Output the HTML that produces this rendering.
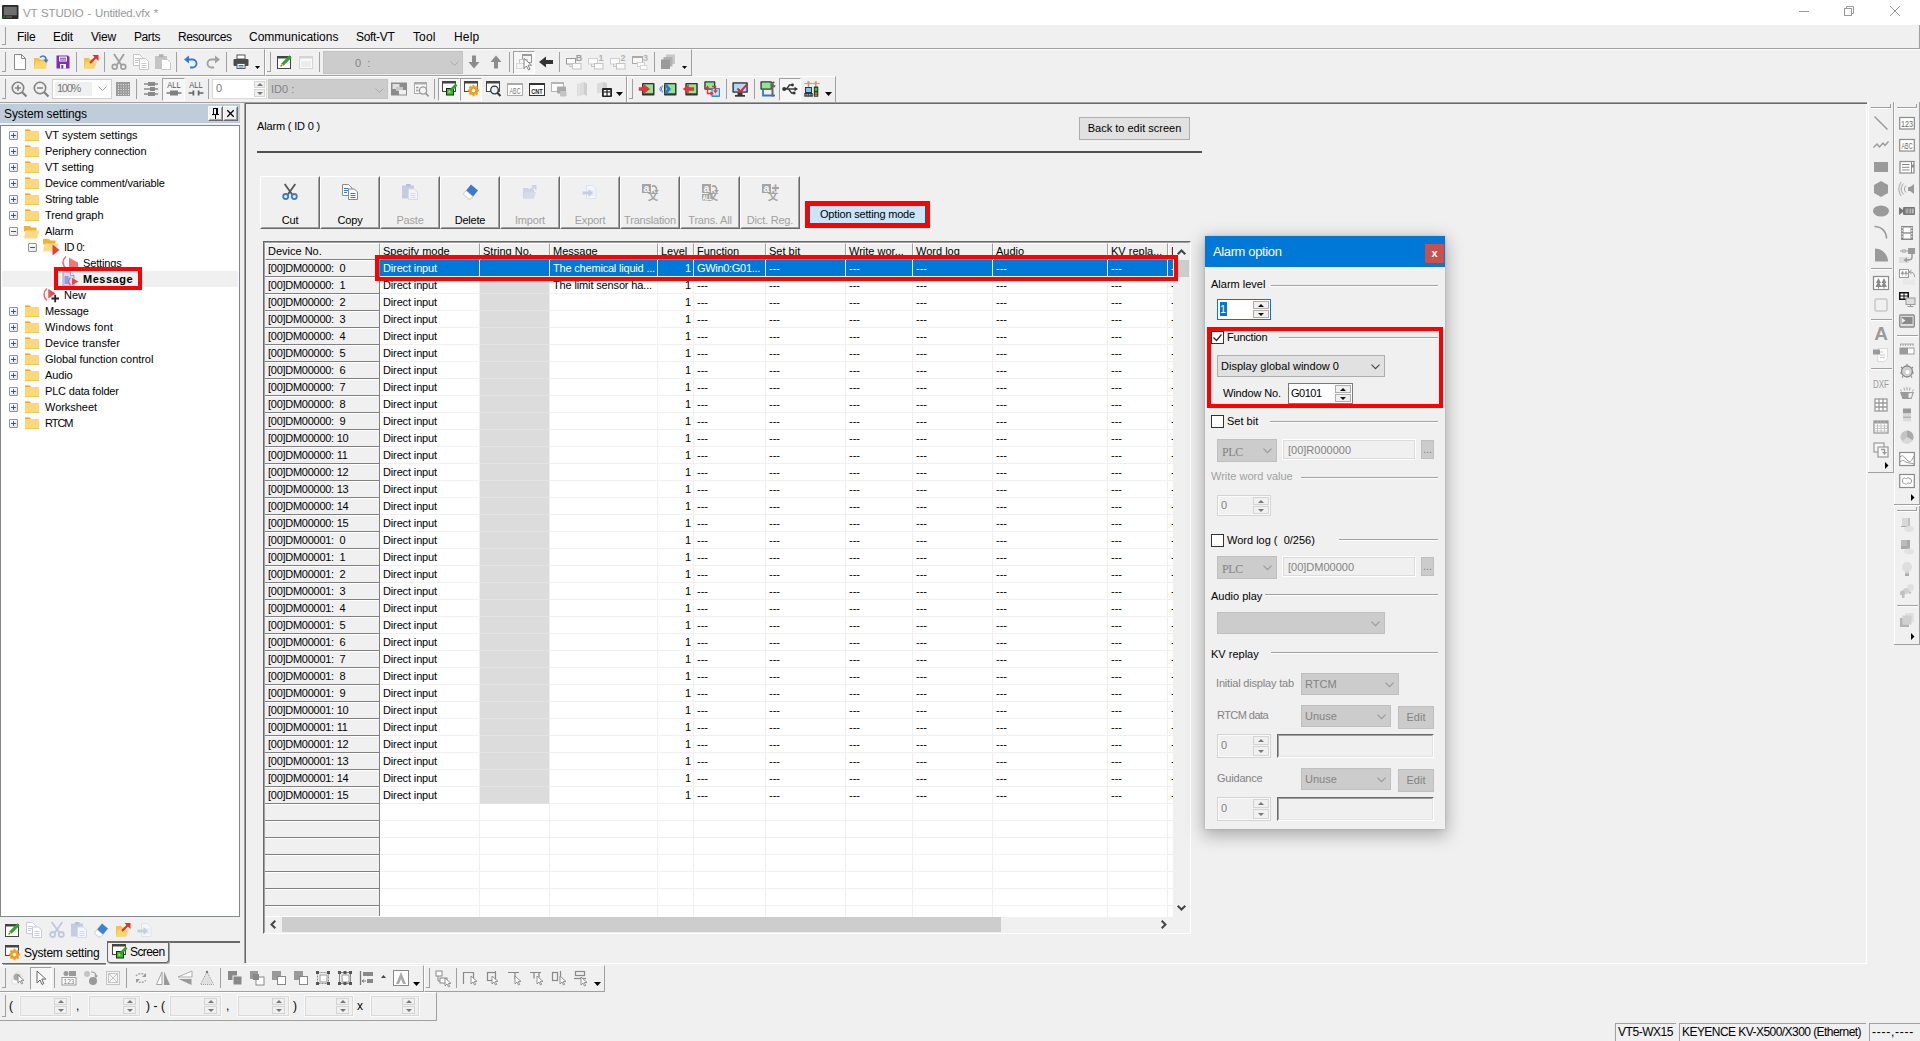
<!DOCTYPE html>
<html lang="en"><head><meta charset="utf-8"><title>VT STUDIO - Untitled.vfx *</title>
<style>
html,body{margin:0;padding:0}
body{width:1920px;height:1041px;overflow:hidden;background:#f0f0f0;position:relative;font-family:"Liberation Sans",sans-serif;font-size:12px;color:#000}
div,svg{position:absolute;box-sizing:border-box}
svg{overflow:visible}
svg text{font-family:"Liberation Sans","Noto Sans CJK SC",sans-serif}
.t{white-space:nowrap;font-size:11px}
.s{white-space:nowrap;font-size:12px}
.g{color:#838383}
.w{color:#fff}
.b{font-weight:bold}
.mono{font-family:"Liberation Mono",monospace}
.raised{border:1px solid;border-color:#fff #696969 #696969 #fff;background:#f0f0f0}
.raised:after{content:"";position:absolute;left:0;top:0;right:0;bottom:0;border:1px solid;border-color:transparent #a0a0a0 #a0a0a0 transparent}
.sunk{border:1px solid;border-color:#a0a0a0 #fff #fff #a0a0a0}
.dd{background:#e1e1e1;border:1px solid #adadad}
.ddd{background:#ccc;border:1px solid #bfbfbf}
.btn{background:#e1e1e1;border:1px solid #adadad;text-align:center}
.fld{background:#fff;border:1px solid #7a7a7a}
.fldd{background:#f0f0f0;border:1px solid #d9d9d9;outline:1px solid #fff}
</style></head><body>
<div style="left:0px;top:0px;width:1920px;height:25px;background:#fff"></div>
<svg style="left:2px;top:5px;" width="17" height="15" viewBox="0 0 17 15"><rect x="0" y="0" width="16.500" height="14" rx="1" fill="#2a2a2a"/><rect x="1.800" y="1.800" width="13" height="8.500" fill="#6e6e6e"/><rect x="1.500" y="11.500" width="1.500" height="1" fill="#3c3"/><rect x="4" y="11.500" width="6" height="1" fill="#777"/></svg>
<div class="s" style="left:23px;top:6px;height:15px;line-height:15px;letter-spacing:-0.189px;color:#999;font-size:11.500px;word-spacing:1px">VT STUDIO - Untitled.vfx *</div>
<svg style="left:1799px;top:11px;" width="10" height="1" viewBox="0 0 10 1"><rect width="10" height="1" fill="#999"/></svg>
<svg style="left:1844px;top:6px;" width="10" height="10" viewBox="0 0 10 10"><path d="M2.500 2.500V.5h7v7h-2" fill="none" stroke="#999"/><rect x=".5" y="2.500" width="7" height="7" fill="#fff" stroke="#999"/></svg>
<svg style="left:1890px;top:6px;" width="10" height="10" viewBox="0 0 10 10"><path d="M0 0l10 10M10 0L0 10" stroke="#999" stroke-width="1"/></svg>
<div style="left:0px;top:25px;width:1920px;height:24px;border-right:1px solid #a0a0a0;border-bottom:1px solid #a0a0a0"></div>
<div style="left:0px;top:49px;width:1920px;height:1px;background:#fff"></div>
<div style="left:2px;top:27px;width:4px;height:18px;border-right:1px solid #a0a0a0;border-bottom:1px solid #a0a0a0"></div>
<div class="s" style="left:17px;top:30px;height:14px;line-height:14px;letter-spacing:-0.209px;">File</div>
<div class="s" style="left:53px;top:30px;height:14px;line-height:14px;letter-spacing:-0.169px;">Edit</div>
<div class="s" style="left:91px;top:30px;height:14px;line-height:14px;letter-spacing:-0.198px;">View</div>
<div class="s" style="left:134px;top:30px;height:14px;line-height:14px;letter-spacing:-0.402px;">Parts</div>
<div class="s" style="left:178px;top:30px;height:14px;line-height:14px;letter-spacing:-0.429px;">Resources</div>
<div class="s" style="left:249px;top:30px;height:14px;line-height:14px;letter-spacing:0.009px;">Communications</div>
<div class="s" style="left:356px;top:30px;height:14px;line-height:14px;letter-spacing:-0.311px;">Soft-VT</div>
<div class="s" style="left:413px;top:30px;height:14px;line-height:14px;letter-spacing:0.122px;">Tool</div>
<div class="s" style="left:454px;top:30px;height:14px;line-height:14px;letter-spacing:0.205px;">Help</div>
<div style="left:0px;top:49px;width:265px;height:27px;border-right:1px solid #a0a0a0;border-bottom:1px solid #a0a0a0;border-top:1px solid #fff"></div>
<div style="left:265px;top:49px;width:427px;height:27px;border-right:1px solid #a0a0a0;border-bottom:1px solid #a0a0a0;border-top:1px solid #fff;border-left:1px solid #fff"></div>
<div style="left:2px;top:52px;width:4px;height:20px;border-right:1px solid #a0a0a0;border-bottom:1px solid #a0a0a0"></div>
<div style="left:267px;top:52px;width:4px;height:20px;border-right:1px solid #a0a0a0;border-bottom:1px solid #a0a0a0"></div>
<svg style="left:11.5px;top:54px;" width="16" height="16" viewBox="0 0 16 16"><path d="M2.500 .5h7l4 4v11h-11z" fill="#fff" stroke="#8a8a8a"/><path d="M9.500 .5v4h4" fill="none" stroke="#8a8a8a"/></svg>
<svg style="left:33px;top:54px;" width="16" height="16" viewBox="0 0 16 16"><path d="M1 4h5l1 1.5h6v9H1z" fill="#f7c04a"/><path d="M1 14.5l2-7h12l-2.5 7z" fill="#fbd56f"/><path d="M7 3.5c3-3 6.5-1 6 3" fill="none" stroke="#2f7dd1" stroke-width="1.6"/><path d="M10.5 5.5h5L13 9z" fill="#2f7dd1"/></svg>
<svg style="left:55px;top:54px;" width="16" height="16" viewBox="0 0 16 16"><path d="M1.5 1.5h11.5l1.5 1.5v11.5h-13z" fill="#7a2fb5"/><rect x="4" y="2.5" width="8" height="5" fill="#fff"/><rect x="5" y="3.7" width="6" height="1" fill="#7a2fb5"/><rect x="5" y="5.5" width="6" height="1" fill="#7a2fb5"/><rect x="5" y="10" width="6" height="4.5" fill="#fff"/><rect x="6.3" y="11" width="2" height="3.5" fill="#7a2fb5"/></svg>
<svg style="left:83px;top:54px;" width="16" height="16" viewBox="0 0 16 16"><path d="M1 4h5l1 1.5h4v9H1z" fill="#f7c04a"/><path d="M1 14.5l2-7h11l-2.5 7z" fill="#fbd56f"/><path d="M7 9L14 2" stroke="#e03030" stroke-width="2.2"/><path d="M9.5 1h6v6z" fill="#e03030"/></svg>
<svg style="left:111px;top:54px;" width="16" height="16" viewBox="0 0 16 16"><path d="M3 0l7.500 11.500M13 0L5.500 11.500" stroke="#a0a0a0" stroke-width="1.900" fill="none"/><circle cx="3.700" cy="12.700" r="2.400" fill="none" stroke="#a0a0a0" stroke-width="1.700"/><circle cx="12.300" cy="12.700" r="2.400" fill="none" stroke="#a0a0a0" stroke-width="1.700"/></svg>
<svg style="left:133px;top:54px;" width="16" height="16" viewBox="0 0 16 16"><path d="M.5 .5h6l3 3v8h-9z" fill="#fff" stroke="#c4c4c4"/><path d="M2 4.500h5M2 6.500h5M2 8.500h3" stroke="#c4c4c4"/><path d="M6.500 4.500h6l3 3v8h-9z" fill="#fff" stroke="#c4c4c4"/><path d="M8.500 9.500h5M8.500 11.500h5M8.500 13.500h5" stroke="#c4c4c4"/></svg>
<svg style="left:155px;top:54px;" width="16" height="16" viewBox="0 0 16 16"><rect x="0" y="2" width="12" height="13" fill="#c4c4c4"/><rect x="4" y=".3" width="4.500" height="3" fill="#b0b0b0"/><path d="M6.500 5.500h6l3 3v7h-9z" fill="#fff" stroke="#c8c8c8"/></svg>
<svg style="left:183px;top:54px;" width="16" height="16" viewBox="0 0 16 16"><path d="M3 5.500h6.500a4 4 0 0 1 0 8H7" fill="none" stroke="#2f7dd1" stroke-width="1.800"/><path d="M1 5.500L6 1.500v8z" fill="#2f7dd1"/></svg>
<svg style="left:205px;top:54px;" width="16" height="16" viewBox="0 0 16 16"><path d="M13 5.500H6.500a4 4 0 0 0 0 8H9" fill="none" stroke="#a0a0a0" stroke-width="1.800"/><path d="M15 5.500L10 1.500v8z" fill="#a0a0a0"/></svg>
<svg style="left:233px;top:54px;" width="16" height="16" viewBox="0 0 16 16"><rect x="4" y="1" width="8" height="4" fill="#fff" stroke="#555"/><rect x="0.500" y="5" width="15" height="7" rx="1" fill="#4a4a4a"/><rect x="4" y="9.500" width="8" height="5" fill="#fff" stroke="#555"/><path d="M5.500 11.500h5M5.500 13h5" stroke="#2f7dd1"/></svg>
<div style="left:76px;top:52px;width:1px;height:20px;background:#a0a0a0"></div>
<div style="left:104px;top:52px;width:1px;height:20px;background:#a0a0a0"></div>
<div style="left:176px;top:52px;width:1px;height:20px;background:#a0a0a0"></div>
<div style="left:226px;top:52px;width:1px;height:20px;background:#a0a0a0"></div>
<div style="left:319px;top:52px;width:1px;height:20px;background:#a0a0a0"></div>
<div style="left:509px;top:52px;width:1px;height:20px;background:#a0a0a0"></div>
<div style="left:559px;top:52px;width:1px;height:20px;background:#a0a0a0"></div>
<div style="left:654px;top:52px;width:1px;height:20px;background:#a0a0a0"></div>
<svg style="left:254.5px;top:65.5px;" width="5" height="3" viewBox="0 0 5 3"><path d="M0 0h5l-2.500 3z" fill="#000"/></svg>
<svg style="left:276px;top:54px;" width="16" height="16" viewBox="0 0 16 16"><rect x="1.500" y="2.500" width="13" height="12" fill="#fff" stroke="#444"/><rect x="1" y="2" width="14" height="2.500" fill="#444"/><path d="M4.500 12.500l1-3.200 8-8 2.200 2.200-8 8z" fill="#2aa52a"/><path d="M4.500 12.500l1-3.200 2.200 2.200z" fill="#f0c090"/><path d="M4.500 12.500l.5-1.500 1 1z" fill="#222"/></svg>
<svg style="left:298px;top:54px;" width="16" height="16" viewBox="0 0 16 16"><rect x="1.500" y="2.500" width="13" height="12" fill="#fafafa" stroke="#d4d4d4"/><rect x="1" y="2" width="14" height="2.500" fill="#d4d4d4"/><path d="M3.500 8h9.500M3.500 10h9.500M3.500 12h9.500" stroke="#c4c4c4" stroke-dasharray="1 1"/></svg>
<div style="left:323px;top:51px;width:140px;height:23px;background:#ccc;border:1px solid #c4c4c4"></div>
<div class="t" style="left:355px;top:56px;height:14px;line-height:14px;color:#838383">0 &nbsp;:</div>
<svg style="left:449.5px;top:60.5px;" width="9" height="5" viewBox="0 0 9 5"><path d="M.5.5l4 4 4-4" fill="none" stroke="#aaa" stroke-width="1"/></svg>
<svg style="left:466px;top:54px;" width="16" height="16" viewBox="0 0 16 16"><path d="M6 1.500h4v6.500h3.500L8 14.500 2.500 8H6z" fill="#8c8c8c"/></svg>
<svg style="left:488px;top:54px;" width="16" height="16" viewBox="0 0 16 16"><path d="M6 14.500h4V8h3.500L8 1.500 2.500 8H6z" fill="#8c8c8c"/></svg>
<div style="left:513px;top:51px;width:22px;height:23px;background:#f6f6f6;border:1px solid;border-color:#a0a0a0 #fff #fff #a0a0a0"></div>
<svg style="left:516px;top:54px;" width="16" height="16" viewBox="0 0 16 16"><rect x="6.500" y=".5" width="9" height="8" fill="#f4f4f4" stroke="#999"/><rect x="6" y="0" width="10" height="2" fill="#999"/><rect x="3.500" y="5.500" width="8" height="6" fill="#f4f4f4" stroke="#c8c8c8"/><rect x=".5" y="9.500" width="8" height="5" fill="#f4f4f4" stroke="#d8d8d8"/><path d="M8 4.500v10l2.500-2.500 2 4 1.500-.8-2-4h3.500z" fill="#fff" stroke="#777" stroke-width=".9"/></svg>
<svg style="left:538px;top:54px;" width="16" height="16" viewBox="0 0 16 16"><path d="M15 6h-7V2.500L1 8l7 5.500V10h7z" fill="#333"/></svg>
<svg style="left:566px;top:54px;" width="16" height="16" viewBox="0 0 16 16"><rect x=".5" y="4.500" width="9" height="5.500" fill="#fafafa" stroke="#9a9a9a"/><rect x="6.500" y="9.500" width="8.500" height="5.500" fill="#fafafa" stroke="#c4c4c4"/><path d="M3.500 10v2.500h3" fill="none" stroke="#c4c4c4"/><text x="13" y="6.500" font-size="9" font-weight="bold" text-anchor="middle" fill="#9a9a9a">B</text></svg>
<svg style="left:588px;top:54px;" width="16" height="16" viewBox="0 0 16 16"><rect x=".5" y="4.500" width="9" height="5.500" fill="#fafafa" stroke="#d0d0d0"/><rect x="6.500" y="9.500" width="8.500" height="5.500" fill="#fafafa" stroke="#c4c4c4"/><path d="M3.500 10v2.500h3" fill="none" stroke="#c4c4c4"/><text x="13" y="6.500" font-size="9" font-weight="bold" text-anchor="middle" fill="#b4b4b4">1</text></svg>
<svg style="left:610px;top:54px;" width="16" height="16" viewBox="0 0 16 16"><rect x=".5" y="4.500" width="9" height="5.500" fill="#fafafa" stroke="#d0d0d0"/><rect x="6.500" y="9.500" width="8.500" height="5.500" fill="#fafafa" stroke="#c4c4c4"/><path d="M3.500 10v2.500h3" fill="none" stroke="#c4c4c4"/><text x="13" y="6.500" font-size="9" font-weight="bold" text-anchor="middle" fill="#b4b4b4">2</text></svg>
<svg style="left:632px;top:54px;" width="16" height="16" viewBox="0 0 16 16"><rect x=".5" y="2.500" width="10" height="7" fill="#fafafa" stroke="#aaa"/><rect x=".5" y="2" width="10" height="2" fill="#aaa"/><rect x="5.500" y="8.500" width="7" height="4" fill="#fafafa" stroke="#d0d0d0"/><rect x="8.500" y="11.500" width="6.500" height="4" fill="#fafafa" stroke="#d8d8d8"/><text x="13.500" y="6.500" font-size="9" font-weight="bold" text-anchor="middle" fill="#b4b4b4">3</text></svg>
<svg style="left:660px;top:54px;" width="16" height="16" viewBox="0 0 16 16"><rect x="6" y=".5" width="9" height="9.500" fill="#c8c8c8"/><rect x="3.500" y="3" width="9" height="9.500" fill="#b0b0b0"/><rect x="1" y="5.500" width="9" height="9.500" fill="#9a9a9a"/></svg>
<svg style="left:681.5px;top:65.5px;" width="5" height="3" viewBox="0 0 5 3"><path d="M0 0h5l-2.500 3z" fill="#000"/></svg>
<div style="left:0px;top:76px;width:627px;height:27px;border-right:1px solid #a0a0a0;border-bottom:1px solid #a0a0a0;border-top:1px solid #fff"></div>
<div style="left:627px;top:76px;width:209px;height:27px;border-right:1px solid #a0a0a0;border-bottom:1px solid #a0a0a0;border-top:1px solid #fff;border-left:1px solid #fff"></div>
<div style="left:2px;top:79px;width:4px;height:20px;border-right:1px solid #a0a0a0;border-bottom:1px solid #a0a0a0"></div>
<div style="left:629px;top:79px;width:4px;height:20px;border-right:1px solid #a0a0a0;border-bottom:1px solid #a0a0a0"></div>
<svg style="left:11px;top:81px;" width="16" height="16" viewBox="0 0 16 16"><circle cx="7" cy="7" r="5.700" fill="none" stroke="#808080" stroke-width="1.600"/><path d="M11.200 11.200l4.300 4.300" stroke="#808080" stroke-width="2.200"/><path d="M4 7h6M7 4v6" stroke="#808080" stroke-width="1.500"/></svg>
<svg style="left:33px;top:81px;" width="16" height="16" viewBox="0 0 16 16"><circle cx="7" cy="7" r="5.700" fill="none" stroke="#808080" stroke-width="1.600"/><path d="M11.200 11.200l4.300 4.300" stroke="#808080" stroke-width="2.200"/><path d="M4 7h6" stroke="#808080" stroke-width="1.500"/></svg>
<div style="left:52px;top:79px;width:60px;height:20px;background:#fff;border:1px solid #d0d0d0"></div>
<div style="left:55px;top:82px;width:37px;height:14px;background:#f0f0f0"></div>
<div class="t" style="left:57px;top:81px;height:14px;line-height:14px;letter-spacing:-1.284px;color:#777">100%</div>
<svg style="left:98px;top:86px;" width="9" height="6" viewBox="0 0 9 6"><path d="M.5.5l4 4 4-4" fill="none" stroke="#999"/></svg>
<svg style="left:115px;top:81px;" width="16" height="16" viewBox="0 0 16 16"><rect x="1" y="1" width="14" height="14" fill="#9a9a9a"/><g fill="#e8e8e8"><rect x="3" y="3" width="1" height="1"/><rect x="3" y="5.5" width="1" height="1"/><rect x="3" y="8" width="1" height="1"/><rect x="3" y="10.5" width="1" height="1"/><rect x="3" y="13" width="1" height="1"/><rect x="5.5" y="3" width="1" height="1"/><rect x="5.5" y="5.5" width="1" height="1"/><rect x="5.5" y="8" width="1" height="1"/><rect x="5.5" y="10.5" width="1" height="1"/><rect x="5.5" y="13" width="1" height="1"/><rect x="8" y="3" width="1" height="1"/><rect x="8" y="5.5" width="1" height="1"/><rect x="8" y="8" width="1" height="1"/><rect x="8" y="10.5" width="1" height="1"/><rect x="8" y="13" width="1" height="1"/><rect x="10.5" y="3" width="1" height="1"/><rect x="10.5" y="5.5" width="1" height="1"/><rect x="10.5" y="8" width="1" height="1"/><rect x="10.5" y="10.5" width="1" height="1"/><rect x="10.5" y="13" width="1" height="1"/><rect x="13" y="3" width="1" height="1"/><rect x="13" y="5.5" width="1" height="1"/><rect x="13" y="8" width="1" height="1"/><rect x="13" y="10.5" width="1" height="1"/><rect x="13" y="13" width="1" height="1"/></g></svg>
<div style="left:136px;top:79px;width:1px;height:20px;background:#a0a0a0"></div>
<div style="left:208px;top:79px;width:1px;height:20px;background:#a0a0a0"></div>
<div style="left:434px;top:79px;width:1px;height:20px;background:#a0a0a0"></div>
<div style="left:726px;top:79px;width:1px;height:20px;background:#a0a0a0"></div>
<div style="left:754px;top:79px;width:1px;height:20px;background:#a0a0a0"></div>
<svg style="left:143px;top:81px;" width="16" height="16" viewBox="0 0 16 16"><path d="M1 3h14M1 8h14M1 13h14" stroke="#555" stroke-width="1.200"/><rect x="5" y="1" width="7" height="4" fill="#8a8a8a"/><rect x="7" y="6" width="5" height="4" fill="#8a8a8a"/><rect x="5" y="11" width="7" height="4" fill="#8a8a8a"/></svg>
<div style="left:162px;top:78px;width:23px;height:23px;background:#f6f6f6;border:1px solid;border-color:#a0a0a0 #fff #fff #a0a0a0"></div>
<svg style="left:165.5px;top:81px;" width="16" height="16" viewBox="0 0 16 16"><text x="8" y="7" font-size="8.500" text-anchor="middle" fill="#555" textLength="13.500" lengthAdjust="spacingAndGlyphs">ALL</text><path d="M.5 12h15" stroke="#666" stroke-width="1.300"/><rect x="4" y="9.500" width="8" height="5" fill="#808080"/></svg>
<svg style="left:187.5px;top:81px;" width="16" height="16" viewBox="0 0 16 16"><text x="8" y="7" font-size="8.500" text-anchor="middle" fill="#555" textLength="13.500" lengthAdjust="spacingAndGlyphs">ALL</text><path d="M.5 12h4.500M11 12h4.500" stroke="#666" stroke-width="1.300"/><rect x="4.500" y="9.500" width="1.800" height="5" fill="#666"/><rect x="9.700" y="9.500" width="1.800" height="5" fill="#666"/></svg>
<div style="left:212px;top:79px;width:55px;height:20px;background:#fff;border:1px solid #d9d9d9"></div>
<div class="t" style="left:216px;top:81px;height:14px;line-height:14px;color:#777">0</div>
<div style="left:254px;top:81px;width:11px;height:7px;background:#f0f0f0;border:1px solid #d4d4d4"></div>
<div style="left:254px;top:89px;width:11px;height:8px;background:#f0f0f0;border:1px solid #d4d4d4"></div>
<svg style="left:256.5px;top:83px;" width="6" height="3" viewBox="0 0 6 3"><path d="M0 3h6L3 0z" fill="#777"/></svg>
<svg style="left:256.5px;top:91.5px;" width="6" height="3" viewBox="0 0 6 3"><path d="M0 0h6L3 3z" fill="#777"/></svg>
<div style="left:268px;top:79px;width:120px;height:20px;background:#ccc;border:1px solid #c4c4c4"></div>
<div class="t" style="left:271px;top:82px;height:14px;line-height:14px;color:#838383">ID0 :</div>
<svg style="left:374.5px;top:87.5px;" width="9" height="5" viewBox="0 0 9 5"><path d="M.5.5l4 4 4-4" fill="none" stroke="#aaa" stroke-width="1"/></svg>
<svg style="left:391px;top:81px;" width="16" height="16" viewBox="0 0 16 16"><rect x="0" y="1.500" width="16" height="13" fill="#8c8c8c"/><rect x="1.500" y="3" width="7" height="5" fill="#e0e0e0"/><rect x="5" y="6" width="7" height="4" fill="#c8c8c8"/><rect x="8" y="9" width="7" height="4.500" fill="#f0f0f0"/></svg>
<svg style="left:413px;top:81px;" width="16" height="16" viewBox="0 0 16 16"><rect x="1.500" y="1.500" width="12" height="11" fill="#fafafa" stroke="#aaa"/><rect x="1" y="1" width="13" height="2.500" fill="#aaa"/><path d="M3 6.500h2.500M3 9.500h2.500" stroke="#999" stroke-width="1.500"/><circle cx="10" cy="9.500" r="3.600" fill="#f4f4f4" stroke="#999" stroke-width="1.300"/><path d="M12.700 12.300l3 3" stroke="#999" stroke-width="1.800"/></svg>
<div style="left:438px;top:78px;width:22px;height:23px;background:#f6f6f6;border:1px solid;border-color:#a0a0a0 #fff #fff #a0a0a0"></div>
<div style="left:460px;top:78px;width:22px;height:23px;background:#f6f6f6;border:1px solid;border-color:#a0a0a0 #fff #fff #a0a0a0"></div>
<svg style="left:441px;top:81px;" width="16" height="16" viewBox="0 0 16 16"><g transform="translate(0,-1)"><rect x="1.500" y="1.500" width="13" height="10" fill="#fff" stroke="#444"/><rect x="1" y="1" width="14" height="2.500" fill="#444"/><rect x="5" y="8" width="8" height="7.500" fill="#222"/><rect x="6" y="9" width="6" height="5.500" fill="#1fd01f"/><path d="M7 13l1-3 6.500-6.500 2 2-6.500 6.500z" fill="#2aa52a"/><path d="M7 13l1-3 2 2z" fill="#f0c090"/></g></svg>
<svg style="left:463px;top:81px;" width="16" height="16" viewBox="0 0 16 16"><g transform="translate(0,-1)"><rect x="1.500" y="1.500" width="13" height="10" fill="#fff" stroke="#444"/><rect x="1" y="1" width="14" height="2.500" fill="#444"/><circle cx="10.500" cy="10.500" r="3.300" fill="none" stroke="#f0a020" stroke-width="2.400"/><g stroke="#f0a020" stroke-width="2"><path d="M10.500 4.800v11.400M4.800 10.500h11.400M6.500 6.500l8 8M14.500 6.500l-8 8"/></g><circle cx="10.500" cy="10.500" r="1.700" fill="#fff"/></g></svg>
<svg style="left:485px;top:81px;" width="16" height="16" viewBox="0 0 16 16"><g transform="translate(0,-1)"><rect x="1.500" y="1.500" width="13" height="10" fill="#fff" stroke="#444"/><rect x="1" y="1" width="14" height="2.500" fill="#444"/><circle cx="9.500" cy="10" r="3.800" fill="#e4f0fa" stroke="#333" stroke-width="1.300"/><path d="M12.300 12.800l3.200 3.200" stroke="#333" stroke-width="2"/></g></svg>
<svg style="left:507px;top:81px;" width="16" height="16" viewBox="0 0 16 16"><rect x=".5" y="2.500" width="15" height="12" fill="#fff" stroke="#aaa"/><rect x=".5" y="2" width="15" height="2" fill="#aaa"/><text x="8" y="12.500" font-size="8.500" text-anchor="middle" fill="#777" textLength="11" lengthAdjust="spacingAndGlyphs">ABC</text></svg>
<svg style="left:529px;top:81px;" width="16" height="16" viewBox="0 0 16 16"><rect x=".5" y="2.500" width="15" height="12" fill="#fff" stroke="#333"/><rect x=".5" y="2" width="15" height="2" fill="#333"/><text x="8" y="12.500" font-size="8" text-anchor="middle" fill="#222" font-weight="bold" textLength="11.500" lengthAdjust="spacingAndGlyphs">CNT</text></svg>
<svg style="left:551px;top:81px;" width="16" height="16" viewBox="0 0 16 16"><rect x=".5" y="1.500" width="12" height="9" fill="#fafafa" stroke="#b4b4b4"/><rect x=".5" y="1" width="12" height="2" fill="#b4b4b4"/><rect x="6" y="5.500" width="9" height="7" rx="1" fill="#a8a8a8"/><rect x="9" y="10" width="6.500" height="5.500" rx="1" fill="#c4c4c4"/></svg>
<svg style="left:574px;top:81px;" width="16" height="16" viewBox="0 0 16 16"><path d="M3 3l7-2v12.500l-7 2z" fill="#dcdcdc"/><path d="M10 1l3 1.500v12.500l-3-1.500z" fill="#cfcfcf"/><path d="M5 2.500v13" stroke="#e8e8e8"/></svg>
<svg style="left:596px;top:81px;" width="16" height="16" viewBox="0 0 16 16"><path d="M1 2.500l6-1.500v10l-6 1.500z" fill="#dcdcdc"/><path d="M7 1l4 1v7l-4-1z" fill="#d0d0d0"/><rect x="6" y="7" width="10" height="9" rx="1" fill="#222"/><rect x="7.800" y="9" width="2.600" height="5.500" fill="#fff"/><rect x="11.600" y="9" width="2.600" height="5.500" fill="#fff"/><path d="M7.800 11h6.400" stroke="#222" stroke-width="1.200"/></svg>
<svg style="left:616px;top:92px;" width="7" height="4" viewBox="0 0 7 4"><path d="M0 0h7l-3.500 4z" fill="#000"/></svg>
<svg style="left:637.5px;top:81px;" width="16" height="16" viewBox="0 0 16 16"><rect x="4" y="2" width="12.500" height="12.500" rx=".8" fill="#333"/><rect x="5.5" y="3.300" width="9.500" height="9" fill="#8be88b"/><path d="M.8 6.300h5.200V3.300l6 4.700-6 4.700V9.700H.8z" fill="#e8303a"/></svg>
<svg style="left:659.5px;top:81px;" width="16" height="16" viewBox="0 0 16 16"><rect x="4" y="2" width="12.500" height="12.500" rx=".8" fill="#333"/><rect x="5.5" y="3.300" width="9.500" height="9" fill="#8be88b"/><path d="M.8 5.500a4 4 0 0 0 0 5M2.600 4.500a6 6 0 0 0 0 7" fill="none" stroke="#3a7bd0" stroke-width=".9"/><path d="M4 3.300h3l4 4.700-4 4.700H4l3-4.700z" fill="#2f78d0"/></svg>
<svg style="left:682px;top:81px;" width="16" height="16" viewBox="0 0 16 16"><rect x="3.3" y="2" width="12.500" height="12.500" rx=".8" fill="#333"/><rect x="4.8" y="3.300" width="9.500" height="9" fill="#8be88b"/><path d="M12 6.300H6.800V3.300l-6 4.700 6 4.700V9.700H12z" fill="#e8303a"/></svg>
<svg style="left:704px;top:81px;" width="16" height="16" viewBox="0 0 16 16"><rect x=".3" y=".3" width="11" height="8.500" rx=".8" fill="#333"/><rect x="1.600" y="1.500" width="8.400" height="6" fill="#8be88b"/><rect x="7.400" y="7" width="8.600" height="9" rx=".8" fill="#2f8fc8"/><rect x="8.600" y="8.200" width="6.200" height="6.200" fill="#bfe6f7"/><path d="M3.500 7v5.500h4M11.500 10V5.500H8" fill="none" stroke="#e8303a" stroke-width="1.400"/><path d="M3.500 4.500l-2.300 3.300h4.600zM6.500 10.200l3.300 2.300-3.300 2.300zM11.500 12.500l-2.300-3.300h4.600z" fill="#e8303a"/></svg>
<svg style="left:732px;top:81px;" width="16" height="16" viewBox="0 0 16 16"><rect x=".4" y="1.300" width="15.400" height="10.500" rx=".8" fill="#333"/><rect x="1.800" y="2.600" width="12.600" height="7.800" fill="#a8dcf8"/><rect x="5.500" y="11.800" width="5" height="2.200" fill="#333"/><rect x="3" y="14" width="10" height="1.700" fill="#333"/><path d="M5.500 7.500l3 3.200 6.300-7" fill="none" stroke="#e02030" stroke-width="2"/></svg>
<svg style="left:760px;top:81px;" width="16" height="16" viewBox="0 0 16 16"><rect x=".4" y=".3" width="11.500" height="8.500" rx=".8" fill="#333"/><rect x="1.700" y="1.500" width="9" height="6" fill="#8be88b"/><path d="M3 9v5.500h12" fill="none" stroke="#2f78d0" stroke-width="1.800"/><path d="M11.500 1.500c1.500-1.500 3-1 3.500 0l-1.500 1 .5 1.500 1.500.2c0 1.500-1 2.300-2 2.300v9h-2v-9c-1-.5-1.500-3 0-5z" fill="#666"/></svg>
<div style="left:779px;top:78px;width:22px;height:23px;background:#f6f6f6;border:1px solid;border-color:#a0a0a0 #fff #fff #a0a0a0"></div>
<svg style="left:782px;top:81px;" width="16" height="16" viewBox="0 0 16 16"><path d="M2 8h11" stroke="#333" stroke-width="1.400"/><path d="M16 8l-3.500-2.200v4.400z" fill="#333"/><circle cx="2.200" cy="8" r="2" fill="#333"/><path d="M4.500 8l3-4h2.500M6.500 8l3 4h2" fill="none" stroke="#333" stroke-width="1.300"/><circle cx="10.500" cy="4" r="1.400" fill="#333"/><rect x="10.800" y="10.700" width="2.600" height="2.600" fill="#333"/></svg>
<svg style="left:804px;top:81px;" width="16" height="16" viewBox="0 0 16 16"><path d="M.3 2.500h15.400" stroke="#aaa" stroke-width="1.200"/><path d="M4.500 .5v6M11.800 .5v6" stroke="#999" stroke-width="1.300"/><rect x="3.500" y=".3" width="2" height="2.200" fill="#f0a020"/><rect x="10.800" y=".3" width="2" height="2.200" fill="#f0a020"/><rect x="1.500" y="6.500" width="6" height="5" fill="#7ac8f0" stroke="#333"/><rect x=".3" y="12" width="8.500" height="3.700" fill="#333"/><path d="M1.500 13.800h6" stroke="#fff" stroke-dasharray="1 .7"/><rect x="9.800" y="5.500" width="4.500" height="10.300" rx=".6" fill="#333"/><rect x="10.800" y="6.800" width="2.500" height="3" fill="#3c3"/><rect x="10.800" y="11.500" width="2.500" height="1.200" fill="#f0a020"/><rect x="10.800" y="13.500" width="2.500" height="1.200" fill="#f0a020"/></svg>
<svg style="left:825px;top:92px;" width="7" height="4" viewBox="0 0 7 4"><path d="M0 0h7l-3.500 4z" fill="#000"/></svg>
<div style="left:0px;top:104px;width:240px;height:19px;background:#bfcddb"></div>
<div class="s" style="left:4px;top:106px;height:16px;line-height:16px;letter-spacing:-0.113px;">System settings</div>
<div class="raised" style="left:208px;top:106px;width:15px;height:15px;"></div>
<div class="raised" style="left:223px;top:106px;width:15px;height:15px;"></div>
<svg style="left:211px;top:108px;" width="9" height="11" viewBox="0 0 9 11"><g fill="#000"><rect x="2" y="0" width="1" height="6"/><rect x="2" y="0" width="5" height="1"/><rect x="5" y="0" width="2" height="6"/><rect x="1" y="6" width="7" height="1"/><rect x="4" y="7" width="1" height="4"/></g></svg>
<svg style="left:227px;top:110px;" width="7" height="7" viewBox="0 0 7 7"><path d="M.3.3l6.400 6.400M6.700.3L.3 6.700" stroke="#000" stroke-width="1.300"/></svg>
<div style="left:0px;top:125px;width:240px;height:792px;background:#fff;border:1px solid #828790"></div>
<div style="left:2px;top:271px;width:236px;height:16px;background:#f0f0f0"></div>
<div style="left:9px;top:131px;width:9px;height:9px;border:1px solid #919191;background:linear-gradient(135deg,#fff,#e4e4e4);border-radius:1px"></div>
<div style="left:11px;top:135px;width:5px;height:1px;background:#3b55a0"></div>
<div style="left:13px;top:133px;width:1px;height:5px;background:#3b55a0"></div>
<svg style="left:25px;top:129px;" width="15" height="13" viewBox="0 0 15 13"><path d="M0 0.500h5l1 1.500h-6z" fill="#e5a92c"/><rect x="0" y="2" width="14" height="10" rx=".5" fill="#fcd77e"/><rect x="0" y="11" width="14" height="1" fill="#f2c55c"/></svg>
<div class="t" style="left:45px;top:128px;height:15px;line-height:15px;letter-spacing:-0.007px;">VT system settings</div>
<div style="left:9px;top:147px;width:9px;height:9px;border:1px solid #919191;background:linear-gradient(135deg,#fff,#e4e4e4);border-radius:1px"></div>
<div style="left:11px;top:151px;width:5px;height:1px;background:#3b55a0"></div>
<div style="left:13px;top:149px;width:1px;height:5px;background:#3b55a0"></div>
<svg style="left:25px;top:145px;" width="15" height="13" viewBox="0 0 15 13"><path d="M0 0.500h5l1 1.500h-6z" fill="#e5a92c"/><rect x="0" y="2" width="14" height="10" rx=".5" fill="#fcd77e"/><rect x="0" y="11" width="14" height="1" fill="#f2c55c"/></svg>
<div class="t" style="left:45px;top:144px;height:15px;line-height:15px;letter-spacing:-0.097px;">Periphery connection</div>
<div style="left:9px;top:163px;width:9px;height:9px;border:1px solid #919191;background:linear-gradient(135deg,#fff,#e4e4e4);border-radius:1px"></div>
<div style="left:11px;top:167px;width:5px;height:1px;background:#3b55a0"></div>
<div style="left:13px;top:165px;width:1px;height:5px;background:#3b55a0"></div>
<svg style="left:25px;top:161px;" width="15" height="13" viewBox="0 0 15 13"><path d="M0 0.500h5l1 1.500h-6z" fill="#e5a92c"/><rect x="0" y="2" width="14" height="10" rx=".5" fill="#fcd77e"/><rect x="0" y="11" width="14" height="1" fill="#f2c55c"/></svg>
<div class="t" style="left:45px;top:160px;height:15px;line-height:15px;letter-spacing:-0.053px;">VT setting</div>
<div style="left:9px;top:179px;width:9px;height:9px;border:1px solid #919191;background:linear-gradient(135deg,#fff,#e4e4e4);border-radius:1px"></div>
<div style="left:11px;top:183px;width:5px;height:1px;background:#3b55a0"></div>
<div style="left:13px;top:181px;width:1px;height:5px;background:#3b55a0"></div>
<svg style="left:25px;top:177px;" width="15" height="13" viewBox="0 0 15 13"><path d="M0 0.500h5l1 1.500h-6z" fill="#e5a92c"/><rect x="0" y="2" width="14" height="10" rx=".5" fill="#fcd77e"/><rect x="0" y="11" width="14" height="1" fill="#f2c55c"/></svg>
<div class="t" style="left:45px;top:176px;height:15px;line-height:15px;letter-spacing:-0.165px;">Device comment/variable</div>
<div style="left:9px;top:195px;width:9px;height:9px;border:1px solid #919191;background:linear-gradient(135deg,#fff,#e4e4e4);border-radius:1px"></div>
<div style="left:11px;top:199px;width:5px;height:1px;background:#3b55a0"></div>
<div style="left:13px;top:197px;width:1px;height:5px;background:#3b55a0"></div>
<svg style="left:25px;top:193px;" width="15" height="13" viewBox="0 0 15 13"><path d="M0 0.500h5l1 1.500h-6z" fill="#e5a92c"/><rect x="0" y="2" width="14" height="10" rx=".5" fill="#fcd77e"/><rect x="0" y="11" width="14" height="1" fill="#f2c55c"/></svg>
<div class="t" style="left:45px;top:192px;height:15px;line-height:15px;letter-spacing:-0.171px;">String table</div>
<div style="left:9px;top:211px;width:9px;height:9px;border:1px solid #919191;background:linear-gradient(135deg,#fff,#e4e4e4);border-radius:1px"></div>
<div style="left:11px;top:215px;width:5px;height:1px;background:#3b55a0"></div>
<div style="left:13px;top:213px;width:1px;height:5px;background:#3b55a0"></div>
<svg style="left:25px;top:209px;" width="15" height="13" viewBox="0 0 15 13"><path d="M0 0.500h5l1 1.500h-6z" fill="#e5a92c"/><rect x="0" y="2" width="14" height="10" rx=".5" fill="#fcd77e"/><rect x="0" y="11" width="14" height="1" fill="#f2c55c"/></svg>
<div class="t" style="left:45px;top:208px;height:15px;line-height:15px;letter-spacing:-0.102px;">Trend graph</div>
<div style="left:9px;top:227px;width:9px;height:9px;border:1px solid #919191;background:linear-gradient(135deg,#fff,#e4e4e4);border-radius:1px"></div>
<div style="left:11px;top:231px;width:5px;height:1px;background:#3b55a0"></div>
<svg style="left:24px;top:225.5px;" width="16" height="13" viewBox="0 0 16 13"><path d="M0 0h6l1 1.500h5.500v4h-12.500z" fill="#efb32c"/><path d="M1.500 4.500h14l-2.500 8h-13z" fill="#fdd98a"/></svg>
<div class="t" style="left:45px;top:224px;height:15px;line-height:15px;letter-spacing:-0.105px;">Alarm</div>
<div style="left:28px;top:243px;width:9px;height:9px;border:1px solid #919191;background:linear-gradient(135deg,#fff,#e4e4e4);border-radius:1px"></div>
<div style="left:30px;top:247px;width:5px;height:1px;background:#3b55a0"></div>
<svg style="left:43px;top:239px;" width="17" height="17" viewBox="0 0 17 17"><path d="M0 0h6l1 1.500h5.500v4h-12.500z" fill="#efb32c"/><path d="M1.500 4.500h14l-2.500 8h-13z" fill="#fdd98a"/><path d="M9.500 5.500l7 5.500-7 5.500z" fill="#e04040"/></svg>
<div class="t" style="left:64px;top:240px;height:15px;line-height:15px;letter-spacing:-0.546px;">ID 0:</div>
<svg style="left:62px;top:256px;" width="16" height="16" viewBox="0 0 16 16"><path d="M4 .5c-4 3.500-4 8.500 0 12" fill="none" stroke="#f06868" stroke-width="1.500"/><path d="M7 1.500l9 5.200v4.800h-9z" fill="#fa7474"/></svg>
<div class="t" style="left:83px;top:256px;height:15px;line-height:15px;letter-spacing:-0.144px;">Settings</div>
<svg style="left:62px;top:271px;" width="17" height="16" viewBox="0 0 17 16"><path d="M1 1h7.500l3.500 3.500v10.500h-11z" fill="#d6d6f8" stroke="#a0a0b8"/><path d="M8.500 1v3.500h3.500" fill="#eee" stroke="#a0a0b8"/><path d="M2.500 6h4M2.500 8h4M2.500 10h4M2.500 12h4" stroke="#3a6ad8"/><path d="M8.500 6.500c-2.500 2-2.500 5.500 0 7.500" fill="none" stroke="#e85858" stroke-width="1.200"/><path d="M10 7l6.500 3.500-6.500 3.500z" fill="#e84848"/></svg>
<div class="t" style="left:83px;top:272px;height:15px;line-height:15px;letter-spacing:0.504px;font-weight:bold">Message</div>
<div style="left:54px;top:267px;width:88px;height:23px;border:4px solid #f00"></div>
<svg style="left:43px;top:288px;" width="16" height="16" viewBox="0 0 16 16"><path d="M4 .5c-4 3.500-4 8.500 0 12" fill="none" stroke="#f06868" stroke-width="1.500"/><path d="M5.500 1l7 4.500-4 2.500-3 2z" fill="#e04848"/><path d="M5.500 1v9.500l3-2v-3z" fill="#e85858"/><path d="M8.500 10.500h7.500M12.200 6.800v7.500" stroke="#222" stroke-width="1.800"/></svg>
<div class="t" style="left:64px;top:288px;height:15px;line-height:15px;letter-spacing:-0.002px;">New</div>
<div style="left:9px;top:307px;width:9px;height:9px;border:1px solid #919191;background:linear-gradient(135deg,#fff,#e4e4e4);border-radius:1px"></div>
<div style="left:11px;top:311px;width:5px;height:1px;background:#3b55a0"></div>
<div style="left:13px;top:309px;width:1px;height:5px;background:#3b55a0"></div>
<svg style="left:25px;top:305px;" width="15" height="13" viewBox="0 0 15 13"><path d="M0 0.500h5l1 1.500h-6z" fill="#e5a92c"/><rect x="0" y="2" width="14" height="10" rx=".5" fill="#fcd77e"/><rect x="0" y="11" width="14" height="1" fill="#f2c55c"/></svg>
<div class="t" style="left:45px;top:304px;height:15px;line-height:15px;letter-spacing:-0.119px;">Message</div>
<div style="left:9px;top:323px;width:9px;height:9px;border:1px solid #919191;background:linear-gradient(135deg,#fff,#e4e4e4);border-radius:1px"></div>
<div style="left:11px;top:327px;width:5px;height:1px;background:#3b55a0"></div>
<div style="left:13px;top:325px;width:1px;height:5px;background:#3b55a0"></div>
<svg style="left:25px;top:321px;" width="15" height="13" viewBox="0 0 15 13"><path d="M0 0.500h5l1 1.500h-6z" fill="#e5a92c"/><rect x="0" y="2" width="14" height="10" rx=".5" fill="#fcd77e"/><rect x="0" y="11" width="14" height="1" fill="#f2c55c"/></svg>
<div class="t" style="left:45px;top:320px;height:15px;line-height:15px;letter-spacing:0.164px;">Windows font</div>
<div style="left:9px;top:339px;width:9px;height:9px;border:1px solid #919191;background:linear-gradient(135deg,#fff,#e4e4e4);border-radius:1px"></div>
<div style="left:11px;top:343px;width:5px;height:1px;background:#3b55a0"></div>
<div style="left:13px;top:341px;width:1px;height:5px;background:#3b55a0"></div>
<svg style="left:25px;top:337px;" width="15" height="13" viewBox="0 0 15 13"><path d="M0 0.500h5l1 1.500h-6z" fill="#e5a92c"/><rect x="0" y="2" width="14" height="10" rx=".5" fill="#fcd77e"/><rect x="0" y="11" width="14" height="1" fill="#f2c55c"/></svg>
<div class="t" style="left:45px;top:336px;height:15px;line-height:15px;letter-spacing:0.068px;">Device transfer</div>
<div style="left:9px;top:355px;width:9px;height:9px;border:1px solid #919191;background:linear-gradient(135deg,#fff,#e4e4e4);border-radius:1px"></div>
<div style="left:11px;top:359px;width:5px;height:1px;background:#3b55a0"></div>
<div style="left:13px;top:357px;width:1px;height:5px;background:#3b55a0"></div>
<svg style="left:25px;top:353px;" width="15" height="13" viewBox="0 0 15 13"><path d="M0 0.500h5l1 1.500h-6z" fill="#e5a92c"/><rect x="0" y="2" width="14" height="10" rx=".5" fill="#fcd77e"/><rect x="0" y="11" width="14" height="1" fill="#f2c55c"/></svg>
<div class="t" style="left:45px;top:352px;height:15px;line-height:15px;letter-spacing:-0.051px;">Global function control</div>
<div style="left:9px;top:371px;width:9px;height:9px;border:1px solid #919191;background:linear-gradient(135deg,#fff,#e4e4e4);border-radius:1px"></div>
<div style="left:11px;top:375px;width:5px;height:1px;background:#3b55a0"></div>
<div style="left:13px;top:373px;width:1px;height:5px;background:#3b55a0"></div>
<svg style="left:25px;top:369px;" width="15" height="13" viewBox="0 0 15 13"><path d="M0 0.500h5l1 1.500h-6z" fill="#e5a92c"/><rect x="0" y="2" width="14" height="10" rx=".5" fill="#fcd77e"/><rect x="0" y="11" width="14" height="1" fill="#f2c55c"/></svg>
<div class="t" style="left:45px;top:368px;height:15px;line-height:15px;letter-spacing:-0.107px;">Audio</div>
<div style="left:9px;top:387px;width:9px;height:9px;border:1px solid #919191;background:linear-gradient(135deg,#fff,#e4e4e4);border-radius:1px"></div>
<div style="left:11px;top:391px;width:5px;height:1px;background:#3b55a0"></div>
<div style="left:13px;top:389px;width:1px;height:5px;background:#3b55a0"></div>
<svg style="left:25px;top:385px;" width="15" height="13" viewBox="0 0 15 13"><path d="M0 0.500h5l1 1.500h-6z" fill="#e5a92c"/><rect x="0" y="2" width="14" height="10" rx=".5" fill="#fcd77e"/><rect x="0" y="11" width="14" height="1" fill="#f2c55c"/></svg>
<div class="t" style="left:45px;top:384px;height:15px;line-height:15px;letter-spacing:-0.176px;">PLC data folder</div>
<div style="left:9px;top:403px;width:9px;height:9px;border:1px solid #919191;background:linear-gradient(135deg,#fff,#e4e4e4);border-radius:1px"></div>
<div style="left:11px;top:407px;width:5px;height:1px;background:#3b55a0"></div>
<div style="left:13px;top:405px;width:1px;height:5px;background:#3b55a0"></div>
<svg style="left:25px;top:401px;" width="15" height="13" viewBox="0 0 15 13"><path d="M0 0.500h5l1 1.500h-6z" fill="#e5a92c"/><rect x="0" y="2" width="14" height="10" rx=".5" fill="#fcd77e"/><rect x="0" y="11" width="14" height="1" fill="#f2c55c"/></svg>
<div class="t" style="left:45px;top:400px;height:15px;line-height:15px;letter-spacing:-0.042px;">Worksheet</div>
<div style="left:9px;top:419px;width:9px;height:9px;border:1px solid #919191;background:linear-gradient(135deg,#fff,#e4e4e4);border-radius:1px"></div>
<div style="left:11px;top:423px;width:5px;height:1px;background:#3b55a0"></div>
<div style="left:13px;top:421px;width:1px;height:5px;background:#3b55a0"></div>
<svg style="left:25px;top:417px;" width="15" height="13" viewBox="0 0 15 13"><path d="M0 0.500h5l1 1.500h-6z" fill="#e5a92c"/><rect x="0" y="2" width="14" height="10" rx=".5" fill="#fcd77e"/><rect x="0" y="11" width="14" height="1" fill="#f2c55c"/></svg>
<div class="t" style="left:45px;top:416px;height:15px;line-height:15px;letter-spacing:-1.043px;">RTCM</div>
<svg style="left:4px;top:922px;" width="16" height="16" viewBox="0 0 16 16"><rect x="1.500" y="2.500" width="13" height="12" fill="#fff" stroke="#444"/><rect x="1" y="2" width="14" height="2.500" fill="#444"/><path d="M4.500 12.500l1-3.200 8-8 2.200 2.200-8 8z" fill="#2aa52a"/><path d="M4.500 12.500l1-3.200 2.200 2.200z" fill="#f0c090"/><path d="M4.500 12.500l.5-1.500 1 1z" fill="#222"/></svg>
<svg style="left:26px;top:922px;" width="16" height="16" viewBox="0 0 16 16"><path d="M.5.5h6l3.500 3.500v7.500h-9.500z" fill="#fff" stroke="#c5cbe0"/><path d="M2 4.500h4.500M2 6.500h4.500M2 8.500h3" stroke="#c5cbe0" stroke-width="1.200"/><path d="M6.500 5h6l3 3v7.500h-9z" fill="#fff" stroke="#c5cbe0"/><path d="M8.500 9.500h5M8.500 11.500h5M8.500 13.500h5" stroke="#c5cbe0" stroke-width="1.200"/></svg>
<svg style="left:49px;top:922px;" width="16" height="16" viewBox="0 0 16 16"><path d="M2.700 0L10.500 11M13.300 0L5.500 11" stroke="#c0c8e0" stroke-width="1.800" fill="none"/><circle cx="3.700" cy="12.500" r="2.500" fill="none" stroke="#c0c8e0" stroke-width="1.800"/><circle cx="12.300" cy="12.500" r="2.500" fill="none" stroke="#c0c8e0" stroke-width="1.800"/></svg>
<svg style="left:71px;top:922px;" width="16" height="16" viewBox="0 0 16 16"><rect x="0" y="1.500" width="12" height="13" rx=".5" fill="#c5cbe0"/><rect x="4" y="0" width="4.500" height="2.500" fill="#b8bfd8"/><path d="M6.500 5h6l3 3v7.500h-9z" fill="#f4f5fa" stroke="#d5d9e8"/><path d="M8.500 9.500h5M8.500 11.500h5M8.500 13.500h5" stroke="#d5d9e8"/></svg>
<svg style="left:93px;top:922px;" width="16" height="16" viewBox="0 0 16 16"><path d="M9 1.500l6 5-5 6-6-5z" fill="#3a82d8"/><path d="M4 7.500l6 5-1.500 1.800c-1 1-2.500 1-3.500 0l-2.500-2c-1-1-1-2 0-3z" fill="#fff" stroke="#aaa" stroke-width=".6"/></svg>
<svg style="left:115px;top:922px;" width="16" height="16" viewBox="0 0 16 16"><path d="M1 4h5l1 1.5h4v9H1z" fill="#f7c04a"/><path d="M1 14.5l2-7h11l-2.5 7z" fill="#fbd56f"/><path d="M7 9L14 2" stroke="#e03030" stroke-width="2.2"/><path d="M9.5 1h6v6z" fill="#e03030"/></svg>
<svg style="left:137px;top:922px;" width="16" height="16" viewBox="0 0 16 16"><path d="M4.500 1.500h6l3.500 3.500v9.500h-9.500z" fill="#f4f6fb" stroke="#dde2ef"/><path d="M8 7h4.500M8 9h4.500M8 11h4.500" stroke="#dde2ef"/><path d="M0.500 7.500h6V5l4.500 4-4.500 4V10.500h-6z" fill="#c5cde2"/></svg>
<div style="left:107px;top:941px;width:133px;height:2px;background:#696969"></div>
<svg style="left:4px;top:945px;" width="16" height="16" viewBox="0 0 16 16"><g transform="translate(0,-1)"><rect x="1.500" y="1.500" width="13" height="10" fill="#fff" stroke="#444"/><rect x="1" y="1" width="14" height="2.500" fill="#444"/><circle cx="10.500" cy="10.500" r="3.300" fill="none" stroke="#f0a020" stroke-width="2.400"/><g stroke="#f0a020" stroke-width="2"><path d="M10.500 4.800v11.400M4.800 10.500h11.400M6.500 6.500l8 8M14.500 6.500l-8 8"/></g><circle cx="10.500" cy="10.500" r="1.700" fill="#fff"/></g></svg>
<div class="s" style="left:24px;top:946px;height:15px;line-height:15px;letter-spacing:-0.228px;">System setting</div>
<div style="left:2px;top:963px;width:104px;height:1px;background:#696969"></div>
<div style="left:3px;top:964px;width:103px;height:1px;background:#a0a0a0"></div>
<div style="left:107px;top:941px;width:62px;height:22px;border:1px solid #696969;border-top:0;border-radius:0 0 3px 3px;box-shadow:1px 1px 0 #a0a0a0"></div>
<svg style="left:111px;top:944px;" width="16" height="16" viewBox="0 0 16 16"><g transform="translate(0,-1)"><rect x="1.500" y="1.500" width="13" height="10" fill="#fff" stroke="#444"/><rect x="1" y="1" width="14" height="2.500" fill="#444"/><rect x="5" y="8" width="8" height="7.500" fill="#222"/><rect x="6" y="9" width="6" height="5.500" fill="#1fd01f"/><path d="M7 13l1-3 6.500-6.500 2 2-6.500 6.500z" fill="#2aa52a"/><path d="M7 13l1-3 2 2z" fill="#f0c090"/></g></svg>
<div class="s" style="left:130px;top:945px;height:15px;line-height:15px;letter-spacing:-0.587px;">Screen</div>
<div style="left:244px;top:102px;width:1px;height:861px;background:#a0a0a0"></div>
<div style="left:245px;top:102px;width:1px;height:861px;background:#696969"></div>
<div style="left:244px;top:102px;width:1623px;height:1px;background:#a0a0a0"></div>
<div style="left:245px;top:103px;width:1622px;height:1px;background:#696969"></div>
<div style="left:1866px;top:104px;width:1px;height:859px;background:#fff"></div>
<div style="left:246px;top:963px;width:1621px;height:1px;background:#fff"></div>
<div class="t" style="left:257px;top:119px;height:15px;line-height:15px;letter-spacing:-0.171px;">Alarm ( ID 0 )</div>
<div style="left:257px;top:151px;width:945px;height:2px;background:#505050"></div>
<div class="btn t" style="left:1079px;top:117px;width:111px;height:23px;line-height:21px">Back to edit screen</div>
<div class="raised" style="left:260px;top:176px;width:60px;height:53px;"></div>
<svg style="left:282px;top:184px;" width="16.5" height="16.5" viewBox="0 0 16.500 16.500"><path d="M2.700 0L10.500 11M13.300 0L5.500 11" stroke="#555" stroke-width="1.800" fill="none"/><circle cx="3.700" cy="12.500" r="2.500" fill="none" stroke="#3a7bd0" stroke-width="1.800"/><circle cx="12.300" cy="12.500" r="2.500" fill="none" stroke="#3a7bd0" stroke-width="1.800"/></svg>
<div class="t" style="left:260px;top:213px;width:60px;height:14px;line-height:14px;text-align:center;letter-spacing:-.2px;">Cut</div>
<div class="raised" style="left:320px;top:176px;width:60px;height:53px;"></div>
<svg style="left:342px;top:184px;" width="16.5" height="16.5" viewBox="0 0 16.500 16.500"><path d="M.5.5h6l3.500 3.500v7.500h-9.500z" fill="#fff" stroke="#8a8a8a"/><path d="M2 4.500h4.500M2 6.500h4.500M2 8.500h3" stroke="#3a7bd0" stroke-width="1.200"/><path d="M6.500 5h6l3 3v7.500h-9z" fill="#fff" stroke="#8a8a8a"/><path d="M8.500 9.500h5M8.500 11.500h5M8.500 13.500h5" stroke="#3a7bd0" stroke-width="1.200"/></svg>
<div class="t" style="left:320px;top:213px;width:60px;height:14px;line-height:14px;text-align:center;letter-spacing:-.2px;">Copy</div>
<div class="raised" style="left:380px;top:176px;width:60px;height:53px;"></div>
<svg style="left:402px;top:184px;" width="16.5" height="16.5" viewBox="0 0 16.500 16.500"><rect x="0" y="1.500" width="12" height="13" rx=".5" fill="#c5cbe0"/><rect x="4" y="0" width="4.500" height="2.500" fill="#b8bfd8"/><path d="M6.500 5h6l3 3v7.500h-9z" fill="#f4f5fa" stroke="#d5d9e8"/><path d="M8.500 9.500h5M8.500 11.500h5M8.500 13.500h5" stroke="#d5d9e8"/></svg>
<div class="t" style="left:380px;top:213px;width:60px;height:14px;line-height:14px;text-align:center;letter-spacing:-.2px;color:#a0a0a0;">Paste</div>
<div class="raised" style="left:440px;top:176px;width:60px;height:53px;"></div>
<svg style="left:462px;top:184px;" width="16.5" height="16.5" viewBox="0 0 16.500 16.500"><path d="M9 .5l7 6-5 6-7-6z" fill="#3a7bd0"/><path d="M4 6.500l7 6-1.500 1.800c-1 1-2.500 1-3.500 0l-3.500-3c-1-1-1-2 0-3z" fill="#fff" stroke="#aaa" stroke-width=".7"/></svg>
<div class="t" style="left:440px;top:213px;width:60px;height:14px;line-height:14px;text-align:center;letter-spacing:-.2px;">Delete</div>
<div class="raised" style="left:500px;top:176px;width:60px;height:53px;"></div>
<svg style="left:522px;top:184px;" width="16.5" height="16.5" viewBox="0 0 16.500 16.500"><path d="M1 4h5l1 1.500h5v9H1z" fill="#cdd3e4"/><path d="M1 14.500l2-6.500h11l-2.500 6.500z" fill="#d6dbea"/><path d="M6 8L12.500 2.500" stroke="#cdd3e4" stroke-width="2.200"/><path d="M9 1h5.500v5.500z" fill="#cdd3e4"/></svg>
<div class="t" style="left:500px;top:213px;width:60px;height:14px;line-height:14px;text-align:center;letter-spacing:-.2px;color:#a0a0a0;">Import</div>
<div class="raised" style="left:560px;top:176px;width:60px;height:53px;"></div>
<svg style="left:582px;top:184px;" width="16.5" height="16.5" viewBox="0 0 16.500 16.500"><path d="M4.500 1.500h6l3.500 3.500v9.500h-9.500z" fill="#f4f6fb" stroke="#dde2ef"/><path d="M8 7h4.500M8 9h4.500M8 11h4.500" stroke="#dde2ef"/><path d="M0.500 7.500h6V5l4.500 4-4.500 4V10.500h-6z" fill="#c5cde2"/></svg>
<div class="t" style="left:560px;top:213px;width:60px;height:14px;line-height:14px;text-align:center;letter-spacing:-.2px;color:#a0a0a0;">Export</div>
<div class="raised" style="left:620px;top:176px;width:60px;height:53px;"></div>
<svg style="left:642px;top:184px;" width="16.5" height="16.5" viewBox="0 0 16.500 16.500"><rect x="0" y="0" width="9" height="9" fill="#a4a4a4"/><text x="4.500" y="8" font-size="10.500" font-weight="bold" text-anchor="middle" fill="#f4f4f4">a</text><text x="11" y="16" font-size="10.500" font-weight="bold" text-anchor="middle" fill="#a4a4a4">文</text><path d="M10 2.500c3-1.500 5 .5 4.500 4" fill="none" stroke="#a4a4a4" stroke-width="1.700"/><path d="M12 6h5l-2.500 3z" fill="#a4a4a4"/></svg>
<div class="t" style="left:620px;top:213px;width:60px;height:14px;line-height:14px;text-align:center;letter-spacing:-.2px;color:#a0a0a0;">Translation</div>
<div class="raised" style="left:680px;top:176px;width:60px;height:53px;"></div>
<svg style="left:702px;top:184px;" width="16.5" height="16.5" viewBox="0 0 16.500 16.500"><rect x="0" y="0" width="9" height="9" fill="#a4a4a4"/><text x="4.500" y="8" font-size="10.500" font-weight="bold" text-anchor="middle" fill="#f4f4f4">a</text><text x="11" y="16" font-size="10.500" font-weight="bold" text-anchor="middle" fill="#a4a4a4">文</text><path d="M10 2.500c3-1.500 5 .5 4.500 4" fill="none" stroke="#a4a4a4" stroke-width="1.700"/><path d="M12 6h5l-2.500 3z" fill="#a4a4a4"/><rect x="0" y="10" width="10.500" height="6.500" fill="#a4a4a4"/><text x="5.200" y="15.800" font-size="7" font-weight="bold" text-anchor="middle" fill="#fff" textLength="9.500" lengthAdjust="spacingAndGlyphs">ALL</text></svg>
<div class="t" style="left:680px;top:213px;width:60px;height:14px;line-height:14px;text-align:center;letter-spacing:-.2px;color:#a0a0a0;">Trans. All</div>
<div class="raised" style="left:740px;top:176px;width:60px;height:53px;"></div>
<svg style="left:762px;top:184px;" width="16.5" height="16.5" viewBox="0 0 16.500 16.500"><rect x="0" y="0" width="9" height="9" fill="#a4a4a4"/><text x="4.500" y="8" font-size="10.500" font-weight="bold" text-anchor="middle" fill="#f4f4f4">a</text><text x="11" y="16" font-size="10.500" font-weight="bold" text-anchor="middle" fill="#a4a4a4">文</text><path d="M10 4h7M13.500 .5v7" stroke="#a4a4a4" stroke-width="1.900"/></svg>
<div class="t" style="left:740px;top:213px;width:60px;height:14px;line-height:14px;text-align:center;letter-spacing:-.2px;color:#a0a0a0;">Dict. Reg.</div>
<div style="left:805px;top:201px;width:125px;height:27px;border:4px solid #f00"></div>
<div style="left:809px;top:205px;width:117px;height:19px;background:#cce4f7;border:1px solid #0f5a9c"></div>
<div class="t" style="left:820px;top:207px;height:15px;line-height:15px;letter-spacing:-0.182px;">Option setting mode</div>
<div style="left:263px;top:241px;width:928px;height:693px;border:2px solid;border-color:#696969 #fff #fff #696969;background:#fff"></div>
<div style="left:264px;top:242px;width:926px;height:691px;border:1px solid;border-color:#a0a0a0 #e3e3e3 #e3e3e3 #a0a0a0"></div>
<div style="left:265px;top:243px;width:115px;height:17px;background:#f0f0f0;border:1px solid;border-color:#fff #a0a0a0 #808080 #fff;overflow:hidden"><div class="t" style="left:2px;top:0px;line-height:14px">Device No.</div></div>
<div style="left:380px;top:243px;width:100px;height:17px;background:#f0f0f0;border:1px solid;border-color:#fff #a0a0a0 #808080 #fff;overflow:hidden"><div class="t" style="left:2px;top:0px;line-height:14px">Specify mode</div></div>
<div style="left:480px;top:243px;width:70px;height:17px;background:#f0f0f0;border:1px solid;border-color:#fff #a0a0a0 #808080 #fff;overflow:hidden"><div class="t" style="left:2px;top:0px;line-height:14px">String No.</div></div>
<div style="left:550px;top:243px;width:108px;height:17px;background:#f0f0f0;border:1px solid;border-color:#fff #a0a0a0 #808080 #fff;overflow:hidden"><div class="t" style="left:2px;top:0px;line-height:14px">Message</div></div>
<div style="left:658px;top:243px;width:36px;height:17px;background:#f0f0f0;border:1px solid;border-color:#fff #a0a0a0 #808080 #fff;overflow:hidden"><div class="t" style="left:2px;top:0px;line-height:14px">Level</div></div>
<div style="left:694px;top:243px;width:72px;height:17px;background:#f0f0f0;border:1px solid;border-color:#fff #a0a0a0 #808080 #fff;overflow:hidden"><div class="t" style="left:2px;top:0px;line-height:14px">Function</div></div>
<div style="left:766px;top:243px;width:80px;height:17px;background:#f0f0f0;border:1px solid;border-color:#fff #a0a0a0 #808080 #fff;overflow:hidden"><div class="t" style="left:2px;top:0px;line-height:14px">Set bit</div></div>
<div style="left:846px;top:243px;width:67px;height:17px;background:#f0f0f0;border:1px solid;border-color:#fff #a0a0a0 #808080 #fff;overflow:hidden"><div class="t" style="left:2px;top:0px;line-height:14px">Write wor...</div></div>
<div style="left:913px;top:243px;width:80px;height:17px;background:#f0f0f0;border:1px solid;border-color:#fff #a0a0a0 #808080 #fff;overflow:hidden"><div class="t" style="left:2px;top:0px;line-height:14px">Word log</div></div>
<div style="left:993px;top:243px;width:115px;height:17px;background:#f0f0f0;border:1px solid;border-color:#fff #a0a0a0 #808080 #fff;overflow:hidden"><div class="t" style="left:2px;top:0px;line-height:14px">Audio</div></div>
<div style="left:1108px;top:243px;width:60px;height:17px;background:#f0f0f0;border:1px solid;border-color:#fff #a0a0a0 #808080 #fff;overflow:hidden"><div class="t" style="left:2px;top:0px;line-height:14px">KV repla...</div></div>
<div style="left:1168px;top:243px;width:6px;height:17px;background:#f0f0f0;border:1px solid;border-color:#fff #a0a0a0 #808080 #fff;overflow:hidden"><div class="t" style="left:2px;top:0px;line-height:14px">I</div></div>
<div style="left:265px;top:260px;width:115px;height:17px;background:#f0f0f0;border-right:1px solid #808080;border-bottom:1px solid #808080;"><div class="t" style="left:3px;top:1px;line-height:14px;letter-spacing:-.27px">[00]DM00000: &nbsp;0</div></div>
<div style="left:265px;top:260px;width:114px;height:1px;background:#fff"></div>
<div style="left:380px;top:276px;width:793px;height:1px;background:#f0f0f0"></div>
<div style="left:265px;top:277px;width:115px;height:17px;background:#f0f0f0;border-right:1px solid #808080;border-bottom:1px solid #808080;"><div class="t" style="left:3px;top:1px;line-height:14px;letter-spacing:-.27px">[00]DM00000: &nbsp;1</div></div>
<div style="left:265px;top:277px;width:114px;height:1px;background:#fff"></div>
<div style="left:380px;top:293px;width:793px;height:1px;background:#f0f0f0"></div>
<div style="left:265px;top:294px;width:115px;height:17px;background:#f0f0f0;border-right:1px solid #808080;border-bottom:1px solid #808080;"><div class="t" style="left:3px;top:1px;line-height:14px;letter-spacing:-.27px">[00]DM00000: &nbsp;2</div></div>
<div style="left:265px;top:294px;width:114px;height:1px;background:#fff"></div>
<div style="left:380px;top:310px;width:793px;height:1px;background:#f0f0f0"></div>
<div style="left:265px;top:311px;width:115px;height:17px;background:#f0f0f0;border-right:1px solid #808080;border-bottom:1px solid #808080;"><div class="t" style="left:3px;top:1px;line-height:14px;letter-spacing:-.27px">[00]DM00000: &nbsp;3</div></div>
<div style="left:265px;top:311px;width:114px;height:1px;background:#fff"></div>
<div style="left:380px;top:327px;width:793px;height:1px;background:#f0f0f0"></div>
<div style="left:265px;top:328px;width:115px;height:17px;background:#f0f0f0;border-right:1px solid #808080;border-bottom:1px solid #808080;"><div class="t" style="left:3px;top:1px;line-height:14px;letter-spacing:-.27px">[00]DM00000: &nbsp;4</div></div>
<div style="left:265px;top:328px;width:114px;height:1px;background:#fff"></div>
<div style="left:380px;top:344px;width:793px;height:1px;background:#f0f0f0"></div>
<div style="left:265px;top:345px;width:115px;height:17px;background:#f0f0f0;border-right:1px solid #808080;border-bottom:1px solid #808080;"><div class="t" style="left:3px;top:1px;line-height:14px;letter-spacing:-.27px">[00]DM00000: &nbsp;5</div></div>
<div style="left:265px;top:345px;width:114px;height:1px;background:#fff"></div>
<div style="left:380px;top:361px;width:793px;height:1px;background:#f0f0f0"></div>
<div style="left:265px;top:362px;width:115px;height:17px;background:#f0f0f0;border-right:1px solid #808080;border-bottom:1px solid #808080;"><div class="t" style="left:3px;top:1px;line-height:14px;letter-spacing:-.27px">[00]DM00000: &nbsp;6</div></div>
<div style="left:265px;top:362px;width:114px;height:1px;background:#fff"></div>
<div style="left:380px;top:378px;width:793px;height:1px;background:#f0f0f0"></div>
<div style="left:265px;top:379px;width:115px;height:17px;background:#f0f0f0;border-right:1px solid #808080;border-bottom:1px solid #808080;"><div class="t" style="left:3px;top:1px;line-height:14px;letter-spacing:-.27px">[00]DM00000: &nbsp;7</div></div>
<div style="left:265px;top:379px;width:114px;height:1px;background:#fff"></div>
<div style="left:380px;top:395px;width:793px;height:1px;background:#f0f0f0"></div>
<div style="left:265px;top:396px;width:115px;height:17px;background:#f0f0f0;border-right:1px solid #808080;border-bottom:1px solid #808080;"><div class="t" style="left:3px;top:1px;line-height:14px;letter-spacing:-.27px">[00]DM00000: &nbsp;8</div></div>
<div style="left:265px;top:396px;width:114px;height:1px;background:#fff"></div>
<div style="left:380px;top:412px;width:793px;height:1px;background:#f0f0f0"></div>
<div style="left:265px;top:413px;width:115px;height:17px;background:#f0f0f0;border-right:1px solid #808080;border-bottom:1px solid #808080;"><div class="t" style="left:3px;top:1px;line-height:14px;letter-spacing:-.27px">[00]DM00000: &nbsp;9</div></div>
<div style="left:265px;top:413px;width:114px;height:1px;background:#fff"></div>
<div style="left:380px;top:429px;width:793px;height:1px;background:#f0f0f0"></div>
<div style="left:265px;top:430px;width:115px;height:17px;background:#f0f0f0;border-right:1px solid #808080;border-bottom:1px solid #808080;"><div class="t" style="left:3px;top:1px;line-height:14px;letter-spacing:-.27px">[00]DM00000: 10</div></div>
<div style="left:265px;top:430px;width:114px;height:1px;background:#fff"></div>
<div style="left:380px;top:446px;width:793px;height:1px;background:#f0f0f0"></div>
<div style="left:265px;top:447px;width:115px;height:17px;background:#f0f0f0;border-right:1px solid #808080;border-bottom:1px solid #808080;"><div class="t" style="left:3px;top:1px;line-height:14px;letter-spacing:-.27px">[00]DM00000: 11</div></div>
<div style="left:265px;top:447px;width:114px;height:1px;background:#fff"></div>
<div style="left:380px;top:463px;width:793px;height:1px;background:#f0f0f0"></div>
<div style="left:265px;top:464px;width:115px;height:17px;background:#f0f0f0;border-right:1px solid #808080;border-bottom:1px solid #808080;"><div class="t" style="left:3px;top:1px;line-height:14px;letter-spacing:-.27px">[00]DM00000: 12</div></div>
<div style="left:265px;top:464px;width:114px;height:1px;background:#fff"></div>
<div style="left:380px;top:480px;width:793px;height:1px;background:#f0f0f0"></div>
<div style="left:265px;top:481px;width:115px;height:17px;background:#f0f0f0;border-right:1px solid #808080;border-bottom:1px solid #808080;"><div class="t" style="left:3px;top:1px;line-height:14px;letter-spacing:-.27px">[00]DM00000: 13</div></div>
<div style="left:265px;top:481px;width:114px;height:1px;background:#fff"></div>
<div style="left:380px;top:497px;width:793px;height:1px;background:#f0f0f0"></div>
<div style="left:265px;top:498px;width:115px;height:17px;background:#f0f0f0;border-right:1px solid #808080;border-bottom:1px solid #808080;"><div class="t" style="left:3px;top:1px;line-height:14px;letter-spacing:-.27px">[00]DM00000: 14</div></div>
<div style="left:265px;top:498px;width:114px;height:1px;background:#fff"></div>
<div style="left:380px;top:514px;width:793px;height:1px;background:#f0f0f0"></div>
<div style="left:265px;top:515px;width:115px;height:17px;background:#f0f0f0;border-right:1px solid #808080;border-bottom:1px solid #808080;"><div class="t" style="left:3px;top:1px;line-height:14px;letter-spacing:-.27px">[00]DM00000: 15</div></div>
<div style="left:265px;top:515px;width:114px;height:1px;background:#fff"></div>
<div style="left:380px;top:531px;width:793px;height:1px;background:#f0f0f0"></div>
<div style="left:265px;top:532px;width:115px;height:17px;background:#f0f0f0;border-right:1px solid #808080;border-bottom:1px solid #808080;"><div class="t" style="left:3px;top:1px;line-height:14px;letter-spacing:-.27px">[00]DM00001: &nbsp;0</div></div>
<div style="left:265px;top:532px;width:114px;height:1px;background:#fff"></div>
<div style="left:380px;top:548px;width:793px;height:1px;background:#f0f0f0"></div>
<div style="left:265px;top:549px;width:115px;height:17px;background:#f0f0f0;border-right:1px solid #808080;border-bottom:1px solid #808080;"><div class="t" style="left:3px;top:1px;line-height:14px;letter-spacing:-.27px">[00]DM00001: &nbsp;1</div></div>
<div style="left:265px;top:549px;width:114px;height:1px;background:#fff"></div>
<div style="left:380px;top:565px;width:793px;height:1px;background:#f0f0f0"></div>
<div style="left:265px;top:566px;width:115px;height:17px;background:#f0f0f0;border-right:1px solid #808080;border-bottom:1px solid #808080;"><div class="t" style="left:3px;top:1px;line-height:14px;letter-spacing:-.27px">[00]DM00001: &nbsp;2</div></div>
<div style="left:265px;top:566px;width:114px;height:1px;background:#fff"></div>
<div style="left:380px;top:582px;width:793px;height:1px;background:#f0f0f0"></div>
<div style="left:265px;top:583px;width:115px;height:17px;background:#f0f0f0;border-right:1px solid #808080;border-bottom:1px solid #808080;"><div class="t" style="left:3px;top:1px;line-height:14px;letter-spacing:-.27px">[00]DM00001: &nbsp;3</div></div>
<div style="left:265px;top:583px;width:114px;height:1px;background:#fff"></div>
<div style="left:380px;top:599px;width:793px;height:1px;background:#f0f0f0"></div>
<div style="left:265px;top:600px;width:115px;height:17px;background:#f0f0f0;border-right:1px solid #808080;border-bottom:1px solid #808080;"><div class="t" style="left:3px;top:1px;line-height:14px;letter-spacing:-.27px">[00]DM00001: &nbsp;4</div></div>
<div style="left:265px;top:600px;width:114px;height:1px;background:#fff"></div>
<div style="left:380px;top:616px;width:793px;height:1px;background:#f0f0f0"></div>
<div style="left:265px;top:617px;width:115px;height:17px;background:#f0f0f0;border-right:1px solid #808080;border-bottom:1px solid #808080;"><div class="t" style="left:3px;top:1px;line-height:14px;letter-spacing:-.27px">[00]DM00001: &nbsp;5</div></div>
<div style="left:265px;top:617px;width:114px;height:1px;background:#fff"></div>
<div style="left:380px;top:633px;width:793px;height:1px;background:#f0f0f0"></div>
<div style="left:265px;top:634px;width:115px;height:17px;background:#f0f0f0;border-right:1px solid #808080;border-bottom:1px solid #808080;"><div class="t" style="left:3px;top:1px;line-height:14px;letter-spacing:-.27px">[00]DM00001: &nbsp;6</div></div>
<div style="left:265px;top:634px;width:114px;height:1px;background:#fff"></div>
<div style="left:380px;top:650px;width:793px;height:1px;background:#f0f0f0"></div>
<div style="left:265px;top:651px;width:115px;height:17px;background:#f0f0f0;border-right:1px solid #808080;border-bottom:1px solid #808080;"><div class="t" style="left:3px;top:1px;line-height:14px;letter-spacing:-.27px">[00]DM00001: &nbsp;7</div></div>
<div style="left:265px;top:651px;width:114px;height:1px;background:#fff"></div>
<div style="left:380px;top:667px;width:793px;height:1px;background:#f0f0f0"></div>
<div style="left:265px;top:668px;width:115px;height:17px;background:#f0f0f0;border-right:1px solid #808080;border-bottom:1px solid #808080;"><div class="t" style="left:3px;top:1px;line-height:14px;letter-spacing:-.27px">[00]DM00001: &nbsp;8</div></div>
<div style="left:265px;top:668px;width:114px;height:1px;background:#fff"></div>
<div style="left:380px;top:684px;width:793px;height:1px;background:#f0f0f0"></div>
<div style="left:265px;top:685px;width:115px;height:17px;background:#f0f0f0;border-right:1px solid #808080;border-bottom:1px solid #808080;"><div class="t" style="left:3px;top:1px;line-height:14px;letter-spacing:-.27px">[00]DM00001: &nbsp;9</div></div>
<div style="left:265px;top:685px;width:114px;height:1px;background:#fff"></div>
<div style="left:380px;top:701px;width:793px;height:1px;background:#f0f0f0"></div>
<div style="left:265px;top:702px;width:115px;height:17px;background:#f0f0f0;border-right:1px solid #808080;border-bottom:1px solid #808080;"><div class="t" style="left:3px;top:1px;line-height:14px;letter-spacing:-.27px">[00]DM00001: 10</div></div>
<div style="left:265px;top:702px;width:114px;height:1px;background:#fff"></div>
<div style="left:380px;top:718px;width:793px;height:1px;background:#f0f0f0"></div>
<div style="left:265px;top:719px;width:115px;height:17px;background:#f0f0f0;border-right:1px solid #808080;border-bottom:1px solid #808080;"><div class="t" style="left:3px;top:1px;line-height:14px;letter-spacing:-.27px">[00]DM00001: 11</div></div>
<div style="left:265px;top:719px;width:114px;height:1px;background:#fff"></div>
<div style="left:380px;top:735px;width:793px;height:1px;background:#f0f0f0"></div>
<div style="left:265px;top:736px;width:115px;height:17px;background:#f0f0f0;border-right:1px solid #808080;border-bottom:1px solid #808080;"><div class="t" style="left:3px;top:1px;line-height:14px;letter-spacing:-.27px">[00]DM00001: 12</div></div>
<div style="left:265px;top:736px;width:114px;height:1px;background:#fff"></div>
<div style="left:380px;top:752px;width:793px;height:1px;background:#f0f0f0"></div>
<div style="left:265px;top:753px;width:115px;height:17px;background:#f0f0f0;border-right:1px solid #808080;border-bottom:1px solid #808080;"><div class="t" style="left:3px;top:1px;line-height:14px;letter-spacing:-.27px">[00]DM00001: 13</div></div>
<div style="left:265px;top:753px;width:114px;height:1px;background:#fff"></div>
<div style="left:380px;top:769px;width:793px;height:1px;background:#f0f0f0"></div>
<div style="left:265px;top:770px;width:115px;height:17px;background:#f0f0f0;border-right:1px solid #808080;border-bottom:1px solid #808080;"><div class="t" style="left:3px;top:1px;line-height:14px;letter-spacing:-.27px">[00]DM00001: 14</div></div>
<div style="left:265px;top:770px;width:114px;height:1px;background:#fff"></div>
<div style="left:380px;top:786px;width:793px;height:1px;background:#f0f0f0"></div>
<div style="left:265px;top:787px;width:115px;height:17px;background:#f0f0f0;border-right:1px solid #808080;border-bottom:1px solid #808080;"><div class="t" style="left:3px;top:1px;line-height:14px;letter-spacing:-.27px">[00]DM00001: 15</div></div>
<div style="left:265px;top:787px;width:114px;height:1px;background:#fff"></div>
<div style="left:380px;top:803px;width:793px;height:1px;background:#f0f0f0"></div>
<div style="left:265px;top:804px;width:115px;height:17px;background:#f0f0f0;border-right:1px solid #808080;border-bottom:1px solid #808080;"><div class="t" style="left:3px;top:1px;line-height:14px;letter-spacing:-.27px"></div></div>
<div style="left:265px;top:804px;width:114px;height:1px;background:#fff"></div>
<div style="left:380px;top:820px;width:793px;height:1px;background:#f0f0f0"></div>
<div style="left:265px;top:821px;width:115px;height:17px;background:#f0f0f0;border-right:1px solid #808080;border-bottom:1px solid #808080;"><div class="t" style="left:3px;top:1px;line-height:14px;letter-spacing:-.27px"></div></div>
<div style="left:265px;top:821px;width:114px;height:1px;background:#fff"></div>
<div style="left:380px;top:837px;width:793px;height:1px;background:#f0f0f0"></div>
<div style="left:265px;top:838px;width:115px;height:17px;background:#f0f0f0;border-right:1px solid #808080;border-bottom:1px solid #808080;"><div class="t" style="left:3px;top:1px;line-height:14px;letter-spacing:-.27px"></div></div>
<div style="left:265px;top:838px;width:114px;height:1px;background:#fff"></div>
<div style="left:380px;top:854px;width:793px;height:1px;background:#f0f0f0"></div>
<div style="left:265px;top:855px;width:115px;height:17px;background:#f0f0f0;border-right:1px solid #808080;border-bottom:1px solid #808080;"><div class="t" style="left:3px;top:1px;line-height:14px;letter-spacing:-.27px"></div></div>
<div style="left:265px;top:855px;width:114px;height:1px;background:#fff"></div>
<div style="left:380px;top:871px;width:793px;height:1px;background:#f0f0f0"></div>
<div style="left:265px;top:872px;width:115px;height:17px;background:#f0f0f0;border-right:1px solid #808080;border-bottom:1px solid #808080;"><div class="t" style="left:3px;top:1px;line-height:14px;letter-spacing:-.27px"></div></div>
<div style="left:265px;top:872px;width:114px;height:1px;background:#fff"></div>
<div style="left:380px;top:888px;width:793px;height:1px;background:#f0f0f0"></div>
<div style="left:265px;top:889px;width:115px;height:17px;background:#f0f0f0;border-right:1px solid #808080;border-bottom:1px solid #808080;"><div class="t" style="left:3px;top:1px;line-height:14px;letter-spacing:-.27px"></div></div>
<div style="left:265px;top:889px;width:114px;height:1px;background:#fff"></div>
<div style="left:380px;top:905px;width:793px;height:1px;background:#f0f0f0"></div>
<div style="left:265px;top:906px;width:115px;height:11px;background:#f0f0f0;border-right:1px solid #808080;"><div class="t" style="left:3px;top:1px;line-height:14px;letter-spacing:-.27px"></div></div>
<div style="left:265px;top:906px;width:114px;height:1px;background:#fff"></div>
<div style="left:479px;top:260px;width:1px;height:657px;background:#f0f0f0"></div>
<div style="left:549px;top:260px;width:1px;height:657px;background:#f0f0f0"></div>
<div style="left:657px;top:260px;width:1px;height:657px;background:#f0f0f0"></div>
<div style="left:693px;top:260px;width:1px;height:657px;background:#f0f0f0"></div>
<div style="left:765px;top:260px;width:1px;height:657px;background:#f0f0f0"></div>
<div style="left:845px;top:260px;width:1px;height:657px;background:#f0f0f0"></div>
<div style="left:912px;top:260px;width:1px;height:657px;background:#f0f0f0"></div>
<div style="left:992px;top:260px;width:1px;height:657px;background:#f0f0f0"></div>
<div style="left:1107px;top:260px;width:1px;height:657px;background:#f0f0f0"></div>
<div style="left:1167px;top:260px;width:1px;height:657px;background:#f0f0f0"></div>
<div style="left:1173px;top:260px;width:1px;height:657px;background:#f0f0f0"></div>
<div style="left:265px;top:916px;width:115px;height:1px;background:#fff"></div>
<div style="left:480px;top:277px;width:69px;height:527px;background:#dcdcdc"></div>
<div style="left:480px;top:293px;width:69px;height:1px;background:#e4e4e4"></div>
<div style="left:480px;top:310px;width:69px;height:1px;background:#e4e4e4"></div>
<div style="left:480px;top:327px;width:69px;height:1px;background:#e4e4e4"></div>
<div style="left:480px;top:344px;width:69px;height:1px;background:#e4e4e4"></div>
<div style="left:480px;top:361px;width:69px;height:1px;background:#e4e4e4"></div>
<div style="left:480px;top:378px;width:69px;height:1px;background:#e4e4e4"></div>
<div style="left:480px;top:395px;width:69px;height:1px;background:#e4e4e4"></div>
<div style="left:480px;top:412px;width:69px;height:1px;background:#e4e4e4"></div>
<div style="left:480px;top:429px;width:69px;height:1px;background:#e4e4e4"></div>
<div style="left:480px;top:446px;width:69px;height:1px;background:#e4e4e4"></div>
<div style="left:480px;top:463px;width:69px;height:1px;background:#e4e4e4"></div>
<div style="left:480px;top:480px;width:69px;height:1px;background:#e4e4e4"></div>
<div style="left:480px;top:497px;width:69px;height:1px;background:#e4e4e4"></div>
<div style="left:480px;top:514px;width:69px;height:1px;background:#e4e4e4"></div>
<div style="left:480px;top:531px;width:69px;height:1px;background:#e4e4e4"></div>
<div style="left:480px;top:548px;width:69px;height:1px;background:#e4e4e4"></div>
<div style="left:480px;top:565px;width:69px;height:1px;background:#e4e4e4"></div>
<div style="left:480px;top:582px;width:69px;height:1px;background:#e4e4e4"></div>
<div style="left:480px;top:599px;width:69px;height:1px;background:#e4e4e4"></div>
<div style="left:480px;top:616px;width:69px;height:1px;background:#e4e4e4"></div>
<div style="left:480px;top:633px;width:69px;height:1px;background:#e4e4e4"></div>
<div style="left:480px;top:650px;width:69px;height:1px;background:#e4e4e4"></div>
<div style="left:480px;top:667px;width:69px;height:1px;background:#e4e4e4"></div>
<div style="left:480px;top:684px;width:69px;height:1px;background:#e4e4e4"></div>
<div style="left:480px;top:701px;width:69px;height:1px;background:#e4e4e4"></div>
<div style="left:480px;top:718px;width:69px;height:1px;background:#e4e4e4"></div>
<div style="left:480px;top:735px;width:69px;height:1px;background:#e4e4e4"></div>
<div style="left:480px;top:752px;width:69px;height:1px;background:#e4e4e4"></div>
<div style="left:480px;top:769px;width:69px;height:1px;background:#e4e4e4"></div>
<div style="left:480px;top:786px;width:69px;height:1px;background:#e4e4e4"></div>
<div style="left:480px;top:803px;width:69px;height:1px;background:#e4e4e4"></div>
<div style="left:380px;top:260px;width:793px;height:16px;background:#0078d7"></div>
<div style="left:479px;top:260px;width:1px;height:16px;background:#e8f0f8"></div>
<div style="left:549px;top:260px;width:1px;height:16px;background:#e8f0f8"></div>
<div style="left:657px;top:260px;width:1px;height:16px;background:#e8f0f8"></div>
<div style="left:693px;top:260px;width:1px;height:16px;background:#e8f0f8"></div>
<div style="left:765px;top:260px;width:1px;height:16px;background:#e8f0f8"></div>
<div style="left:845px;top:260px;width:1px;height:16px;background:#e8f0f8"></div>
<div style="left:912px;top:260px;width:1px;height:16px;background:#e8f0f8"></div>
<div style="left:992px;top:260px;width:1px;height:16px;background:#e8f0f8"></div>
<div style="left:1107px;top:260px;width:1px;height:16px;background:#e8f0f8"></div>
<div style="left:1167px;top:260px;width:1px;height:16px;background:#e8f0f8"></div>
<div style="left:1173px;top:260px;width:1px;height:16px;background:#e8f0f8"></div>
<div class="t" style="left:383px;top:261px;height:14px;line-height:14px;letter-spacing:-0.137px;color:#fff;">Direct input</div>
<div class="t" style="left:658px;top:261px;width:33px;text-align:right;line-height:14px;height:14px;color:#fff;">1</div>
<div class="t" style="left:553px;top:261px;height:14px;line-height:14px;letter-spacing:-0.191px;color:#fff;">The chemical liquid ...</div>
<div class="t" style="left:697px;top:261px;height:14px;line-height:14px;letter-spacing:-0.303px;color:#fff;">GWin0:G01...</div>
<div class="t" style="left:769px;top:261px;height:14px;line-height:14px;color:#fff;">---</div>
<div class="t" style="left:849px;top:261px;height:14px;line-height:14px;color:#fff;">---</div>
<div class="t" style="left:916px;top:261px;height:14px;line-height:14px;color:#fff;">---</div>
<div class="t" style="left:996px;top:261px;height:14px;line-height:14px;color:#fff;">---</div>
<div class="t" style="left:1111px;top:261px;height:14px;line-height:14px;color:#fff;">---</div>
<div class="t" style="left:1171px;top:261px;height:14px;line-height:14px;color:#fff;width:2px;overflow:hidden">-</div>
<div class="t" style="left:383px;top:278px;height:14px;line-height:14px;letter-spacing:-0.137px;">Direct input</div>
<div class="t" style="left:658px;top:278px;width:33px;text-align:right;line-height:14px;height:14px;">1</div>
<div class="t" style="left:697px;top:278px;height:14px;line-height:14px;">---</div>
<div class="t" style="left:553px;top:278px;height:14px;line-height:14px;letter-spacing:-0.141px;">The limit sensor ha...</div>
<div class="t" style="left:769px;top:278px;height:14px;line-height:14px;">---</div>
<div class="t" style="left:849px;top:278px;height:14px;line-height:14px;">---</div>
<div class="t" style="left:916px;top:278px;height:14px;line-height:14px;">---</div>
<div class="t" style="left:996px;top:278px;height:14px;line-height:14px;">---</div>
<div class="t" style="left:1111px;top:278px;height:14px;line-height:14px;">---</div>
<div class="t" style="left:1171px;top:278px;height:14px;line-height:14px;width:2px;overflow:hidden">-</div>
<div class="t" style="left:383px;top:295px;height:14px;line-height:14px;letter-spacing:-0.137px;">Direct input</div>
<div class="t" style="left:658px;top:295px;width:33px;text-align:right;line-height:14px;height:14px;">1</div>
<div class="t" style="left:697px;top:295px;height:14px;line-height:14px;">---</div>
<div class="t" style="left:769px;top:295px;height:14px;line-height:14px;">---</div>
<div class="t" style="left:849px;top:295px;height:14px;line-height:14px;">---</div>
<div class="t" style="left:916px;top:295px;height:14px;line-height:14px;">---</div>
<div class="t" style="left:996px;top:295px;height:14px;line-height:14px;">---</div>
<div class="t" style="left:1111px;top:295px;height:14px;line-height:14px;">---</div>
<div class="t" style="left:1171px;top:295px;height:14px;line-height:14px;width:2px;overflow:hidden">-</div>
<div class="t" style="left:383px;top:312px;height:14px;line-height:14px;letter-spacing:-0.137px;">Direct input</div>
<div class="t" style="left:658px;top:312px;width:33px;text-align:right;line-height:14px;height:14px;">1</div>
<div class="t" style="left:697px;top:312px;height:14px;line-height:14px;">---</div>
<div class="t" style="left:769px;top:312px;height:14px;line-height:14px;">---</div>
<div class="t" style="left:849px;top:312px;height:14px;line-height:14px;">---</div>
<div class="t" style="left:916px;top:312px;height:14px;line-height:14px;">---</div>
<div class="t" style="left:996px;top:312px;height:14px;line-height:14px;">---</div>
<div class="t" style="left:1111px;top:312px;height:14px;line-height:14px;">---</div>
<div class="t" style="left:1171px;top:312px;height:14px;line-height:14px;width:2px;overflow:hidden">-</div>
<div class="t" style="left:383px;top:329px;height:14px;line-height:14px;letter-spacing:-0.137px;">Direct input</div>
<div class="t" style="left:658px;top:329px;width:33px;text-align:right;line-height:14px;height:14px;">1</div>
<div class="t" style="left:697px;top:329px;height:14px;line-height:14px;">---</div>
<div class="t" style="left:769px;top:329px;height:14px;line-height:14px;">---</div>
<div class="t" style="left:849px;top:329px;height:14px;line-height:14px;">---</div>
<div class="t" style="left:916px;top:329px;height:14px;line-height:14px;">---</div>
<div class="t" style="left:996px;top:329px;height:14px;line-height:14px;">---</div>
<div class="t" style="left:1111px;top:329px;height:14px;line-height:14px;">---</div>
<div class="t" style="left:1171px;top:329px;height:14px;line-height:14px;width:2px;overflow:hidden">-</div>
<div class="t" style="left:383px;top:346px;height:14px;line-height:14px;letter-spacing:-0.137px;">Direct input</div>
<div class="t" style="left:658px;top:346px;width:33px;text-align:right;line-height:14px;height:14px;">1</div>
<div class="t" style="left:697px;top:346px;height:14px;line-height:14px;">---</div>
<div class="t" style="left:769px;top:346px;height:14px;line-height:14px;">---</div>
<div class="t" style="left:849px;top:346px;height:14px;line-height:14px;">---</div>
<div class="t" style="left:916px;top:346px;height:14px;line-height:14px;">---</div>
<div class="t" style="left:996px;top:346px;height:14px;line-height:14px;">---</div>
<div class="t" style="left:1111px;top:346px;height:14px;line-height:14px;">---</div>
<div class="t" style="left:1171px;top:346px;height:14px;line-height:14px;width:2px;overflow:hidden">-</div>
<div class="t" style="left:383px;top:363px;height:14px;line-height:14px;letter-spacing:-0.137px;">Direct input</div>
<div class="t" style="left:658px;top:363px;width:33px;text-align:right;line-height:14px;height:14px;">1</div>
<div class="t" style="left:697px;top:363px;height:14px;line-height:14px;">---</div>
<div class="t" style="left:769px;top:363px;height:14px;line-height:14px;">---</div>
<div class="t" style="left:849px;top:363px;height:14px;line-height:14px;">---</div>
<div class="t" style="left:916px;top:363px;height:14px;line-height:14px;">---</div>
<div class="t" style="left:996px;top:363px;height:14px;line-height:14px;">---</div>
<div class="t" style="left:1111px;top:363px;height:14px;line-height:14px;">---</div>
<div class="t" style="left:1171px;top:363px;height:14px;line-height:14px;width:2px;overflow:hidden">-</div>
<div class="t" style="left:383px;top:380px;height:14px;line-height:14px;letter-spacing:-0.137px;">Direct input</div>
<div class="t" style="left:658px;top:380px;width:33px;text-align:right;line-height:14px;height:14px;">1</div>
<div class="t" style="left:697px;top:380px;height:14px;line-height:14px;">---</div>
<div class="t" style="left:769px;top:380px;height:14px;line-height:14px;">---</div>
<div class="t" style="left:849px;top:380px;height:14px;line-height:14px;">---</div>
<div class="t" style="left:916px;top:380px;height:14px;line-height:14px;">---</div>
<div class="t" style="left:996px;top:380px;height:14px;line-height:14px;">---</div>
<div class="t" style="left:1111px;top:380px;height:14px;line-height:14px;">---</div>
<div class="t" style="left:1171px;top:380px;height:14px;line-height:14px;width:2px;overflow:hidden">-</div>
<div class="t" style="left:383px;top:397px;height:14px;line-height:14px;letter-spacing:-0.137px;">Direct input</div>
<div class="t" style="left:658px;top:397px;width:33px;text-align:right;line-height:14px;height:14px;">1</div>
<div class="t" style="left:697px;top:397px;height:14px;line-height:14px;">---</div>
<div class="t" style="left:769px;top:397px;height:14px;line-height:14px;">---</div>
<div class="t" style="left:849px;top:397px;height:14px;line-height:14px;">---</div>
<div class="t" style="left:916px;top:397px;height:14px;line-height:14px;">---</div>
<div class="t" style="left:996px;top:397px;height:14px;line-height:14px;">---</div>
<div class="t" style="left:1111px;top:397px;height:14px;line-height:14px;">---</div>
<div class="t" style="left:1171px;top:397px;height:14px;line-height:14px;width:2px;overflow:hidden">-</div>
<div class="t" style="left:383px;top:414px;height:14px;line-height:14px;letter-spacing:-0.137px;">Direct input</div>
<div class="t" style="left:658px;top:414px;width:33px;text-align:right;line-height:14px;height:14px;">1</div>
<div class="t" style="left:697px;top:414px;height:14px;line-height:14px;">---</div>
<div class="t" style="left:769px;top:414px;height:14px;line-height:14px;">---</div>
<div class="t" style="left:849px;top:414px;height:14px;line-height:14px;">---</div>
<div class="t" style="left:916px;top:414px;height:14px;line-height:14px;">---</div>
<div class="t" style="left:996px;top:414px;height:14px;line-height:14px;">---</div>
<div class="t" style="left:1111px;top:414px;height:14px;line-height:14px;">---</div>
<div class="t" style="left:1171px;top:414px;height:14px;line-height:14px;width:2px;overflow:hidden">-</div>
<div class="t" style="left:383px;top:431px;height:14px;line-height:14px;letter-spacing:-0.137px;">Direct input</div>
<div class="t" style="left:658px;top:431px;width:33px;text-align:right;line-height:14px;height:14px;">1</div>
<div class="t" style="left:697px;top:431px;height:14px;line-height:14px;">---</div>
<div class="t" style="left:769px;top:431px;height:14px;line-height:14px;">---</div>
<div class="t" style="left:849px;top:431px;height:14px;line-height:14px;">---</div>
<div class="t" style="left:916px;top:431px;height:14px;line-height:14px;">---</div>
<div class="t" style="left:996px;top:431px;height:14px;line-height:14px;">---</div>
<div class="t" style="left:1111px;top:431px;height:14px;line-height:14px;">---</div>
<div class="t" style="left:1171px;top:431px;height:14px;line-height:14px;width:2px;overflow:hidden">-</div>
<div class="t" style="left:383px;top:448px;height:14px;line-height:14px;letter-spacing:-0.137px;">Direct input</div>
<div class="t" style="left:658px;top:448px;width:33px;text-align:right;line-height:14px;height:14px;">1</div>
<div class="t" style="left:697px;top:448px;height:14px;line-height:14px;">---</div>
<div class="t" style="left:769px;top:448px;height:14px;line-height:14px;">---</div>
<div class="t" style="left:849px;top:448px;height:14px;line-height:14px;">---</div>
<div class="t" style="left:916px;top:448px;height:14px;line-height:14px;">---</div>
<div class="t" style="left:996px;top:448px;height:14px;line-height:14px;">---</div>
<div class="t" style="left:1111px;top:448px;height:14px;line-height:14px;">---</div>
<div class="t" style="left:1171px;top:448px;height:14px;line-height:14px;width:2px;overflow:hidden">-</div>
<div class="t" style="left:383px;top:465px;height:14px;line-height:14px;letter-spacing:-0.137px;">Direct input</div>
<div class="t" style="left:658px;top:465px;width:33px;text-align:right;line-height:14px;height:14px;">1</div>
<div class="t" style="left:697px;top:465px;height:14px;line-height:14px;">---</div>
<div class="t" style="left:769px;top:465px;height:14px;line-height:14px;">---</div>
<div class="t" style="left:849px;top:465px;height:14px;line-height:14px;">---</div>
<div class="t" style="left:916px;top:465px;height:14px;line-height:14px;">---</div>
<div class="t" style="left:996px;top:465px;height:14px;line-height:14px;">---</div>
<div class="t" style="left:1111px;top:465px;height:14px;line-height:14px;">---</div>
<div class="t" style="left:1171px;top:465px;height:14px;line-height:14px;width:2px;overflow:hidden">-</div>
<div class="t" style="left:383px;top:482px;height:14px;line-height:14px;letter-spacing:-0.137px;">Direct input</div>
<div class="t" style="left:658px;top:482px;width:33px;text-align:right;line-height:14px;height:14px;">1</div>
<div class="t" style="left:697px;top:482px;height:14px;line-height:14px;">---</div>
<div class="t" style="left:769px;top:482px;height:14px;line-height:14px;">---</div>
<div class="t" style="left:849px;top:482px;height:14px;line-height:14px;">---</div>
<div class="t" style="left:916px;top:482px;height:14px;line-height:14px;">---</div>
<div class="t" style="left:996px;top:482px;height:14px;line-height:14px;">---</div>
<div class="t" style="left:1111px;top:482px;height:14px;line-height:14px;">---</div>
<div class="t" style="left:1171px;top:482px;height:14px;line-height:14px;width:2px;overflow:hidden">-</div>
<div class="t" style="left:383px;top:499px;height:14px;line-height:14px;letter-spacing:-0.137px;">Direct input</div>
<div class="t" style="left:658px;top:499px;width:33px;text-align:right;line-height:14px;height:14px;">1</div>
<div class="t" style="left:697px;top:499px;height:14px;line-height:14px;">---</div>
<div class="t" style="left:769px;top:499px;height:14px;line-height:14px;">---</div>
<div class="t" style="left:849px;top:499px;height:14px;line-height:14px;">---</div>
<div class="t" style="left:916px;top:499px;height:14px;line-height:14px;">---</div>
<div class="t" style="left:996px;top:499px;height:14px;line-height:14px;">---</div>
<div class="t" style="left:1111px;top:499px;height:14px;line-height:14px;">---</div>
<div class="t" style="left:1171px;top:499px;height:14px;line-height:14px;width:2px;overflow:hidden">-</div>
<div class="t" style="left:383px;top:516px;height:14px;line-height:14px;letter-spacing:-0.137px;">Direct input</div>
<div class="t" style="left:658px;top:516px;width:33px;text-align:right;line-height:14px;height:14px;">1</div>
<div class="t" style="left:697px;top:516px;height:14px;line-height:14px;">---</div>
<div class="t" style="left:769px;top:516px;height:14px;line-height:14px;">---</div>
<div class="t" style="left:849px;top:516px;height:14px;line-height:14px;">---</div>
<div class="t" style="left:916px;top:516px;height:14px;line-height:14px;">---</div>
<div class="t" style="left:996px;top:516px;height:14px;line-height:14px;">---</div>
<div class="t" style="left:1111px;top:516px;height:14px;line-height:14px;">---</div>
<div class="t" style="left:1171px;top:516px;height:14px;line-height:14px;width:2px;overflow:hidden">-</div>
<div class="t" style="left:383px;top:533px;height:14px;line-height:14px;letter-spacing:-0.137px;">Direct input</div>
<div class="t" style="left:658px;top:533px;width:33px;text-align:right;line-height:14px;height:14px;">1</div>
<div class="t" style="left:697px;top:533px;height:14px;line-height:14px;">---</div>
<div class="t" style="left:769px;top:533px;height:14px;line-height:14px;">---</div>
<div class="t" style="left:849px;top:533px;height:14px;line-height:14px;">---</div>
<div class="t" style="left:916px;top:533px;height:14px;line-height:14px;">---</div>
<div class="t" style="left:996px;top:533px;height:14px;line-height:14px;">---</div>
<div class="t" style="left:1111px;top:533px;height:14px;line-height:14px;">---</div>
<div class="t" style="left:1171px;top:533px;height:14px;line-height:14px;width:2px;overflow:hidden">-</div>
<div class="t" style="left:383px;top:550px;height:14px;line-height:14px;letter-spacing:-0.137px;">Direct input</div>
<div class="t" style="left:658px;top:550px;width:33px;text-align:right;line-height:14px;height:14px;">1</div>
<div class="t" style="left:697px;top:550px;height:14px;line-height:14px;">---</div>
<div class="t" style="left:769px;top:550px;height:14px;line-height:14px;">---</div>
<div class="t" style="left:849px;top:550px;height:14px;line-height:14px;">---</div>
<div class="t" style="left:916px;top:550px;height:14px;line-height:14px;">---</div>
<div class="t" style="left:996px;top:550px;height:14px;line-height:14px;">---</div>
<div class="t" style="left:1111px;top:550px;height:14px;line-height:14px;">---</div>
<div class="t" style="left:1171px;top:550px;height:14px;line-height:14px;width:2px;overflow:hidden">-</div>
<div class="t" style="left:383px;top:567px;height:14px;line-height:14px;letter-spacing:-0.137px;">Direct input</div>
<div class="t" style="left:658px;top:567px;width:33px;text-align:right;line-height:14px;height:14px;">1</div>
<div class="t" style="left:697px;top:567px;height:14px;line-height:14px;">---</div>
<div class="t" style="left:769px;top:567px;height:14px;line-height:14px;">---</div>
<div class="t" style="left:849px;top:567px;height:14px;line-height:14px;">---</div>
<div class="t" style="left:916px;top:567px;height:14px;line-height:14px;">---</div>
<div class="t" style="left:996px;top:567px;height:14px;line-height:14px;">---</div>
<div class="t" style="left:1111px;top:567px;height:14px;line-height:14px;">---</div>
<div class="t" style="left:1171px;top:567px;height:14px;line-height:14px;width:2px;overflow:hidden">-</div>
<div class="t" style="left:383px;top:584px;height:14px;line-height:14px;letter-spacing:-0.137px;">Direct input</div>
<div class="t" style="left:658px;top:584px;width:33px;text-align:right;line-height:14px;height:14px;">1</div>
<div class="t" style="left:697px;top:584px;height:14px;line-height:14px;">---</div>
<div class="t" style="left:769px;top:584px;height:14px;line-height:14px;">---</div>
<div class="t" style="left:849px;top:584px;height:14px;line-height:14px;">---</div>
<div class="t" style="left:916px;top:584px;height:14px;line-height:14px;">---</div>
<div class="t" style="left:996px;top:584px;height:14px;line-height:14px;">---</div>
<div class="t" style="left:1111px;top:584px;height:14px;line-height:14px;">---</div>
<div class="t" style="left:1171px;top:584px;height:14px;line-height:14px;width:2px;overflow:hidden">-</div>
<div class="t" style="left:383px;top:601px;height:14px;line-height:14px;letter-spacing:-0.137px;">Direct input</div>
<div class="t" style="left:658px;top:601px;width:33px;text-align:right;line-height:14px;height:14px;">1</div>
<div class="t" style="left:697px;top:601px;height:14px;line-height:14px;">---</div>
<div class="t" style="left:769px;top:601px;height:14px;line-height:14px;">---</div>
<div class="t" style="left:849px;top:601px;height:14px;line-height:14px;">---</div>
<div class="t" style="left:916px;top:601px;height:14px;line-height:14px;">---</div>
<div class="t" style="left:996px;top:601px;height:14px;line-height:14px;">---</div>
<div class="t" style="left:1111px;top:601px;height:14px;line-height:14px;">---</div>
<div class="t" style="left:1171px;top:601px;height:14px;line-height:14px;width:2px;overflow:hidden">-</div>
<div class="t" style="left:383px;top:618px;height:14px;line-height:14px;letter-spacing:-0.137px;">Direct input</div>
<div class="t" style="left:658px;top:618px;width:33px;text-align:right;line-height:14px;height:14px;">1</div>
<div class="t" style="left:697px;top:618px;height:14px;line-height:14px;">---</div>
<div class="t" style="left:769px;top:618px;height:14px;line-height:14px;">---</div>
<div class="t" style="left:849px;top:618px;height:14px;line-height:14px;">---</div>
<div class="t" style="left:916px;top:618px;height:14px;line-height:14px;">---</div>
<div class="t" style="left:996px;top:618px;height:14px;line-height:14px;">---</div>
<div class="t" style="left:1111px;top:618px;height:14px;line-height:14px;">---</div>
<div class="t" style="left:1171px;top:618px;height:14px;line-height:14px;width:2px;overflow:hidden">-</div>
<div class="t" style="left:383px;top:635px;height:14px;line-height:14px;letter-spacing:-0.137px;">Direct input</div>
<div class="t" style="left:658px;top:635px;width:33px;text-align:right;line-height:14px;height:14px;">1</div>
<div class="t" style="left:697px;top:635px;height:14px;line-height:14px;">---</div>
<div class="t" style="left:769px;top:635px;height:14px;line-height:14px;">---</div>
<div class="t" style="left:849px;top:635px;height:14px;line-height:14px;">---</div>
<div class="t" style="left:916px;top:635px;height:14px;line-height:14px;">---</div>
<div class="t" style="left:996px;top:635px;height:14px;line-height:14px;">---</div>
<div class="t" style="left:1111px;top:635px;height:14px;line-height:14px;">---</div>
<div class="t" style="left:1171px;top:635px;height:14px;line-height:14px;width:2px;overflow:hidden">-</div>
<div class="t" style="left:383px;top:652px;height:14px;line-height:14px;letter-spacing:-0.137px;">Direct input</div>
<div class="t" style="left:658px;top:652px;width:33px;text-align:right;line-height:14px;height:14px;">1</div>
<div class="t" style="left:697px;top:652px;height:14px;line-height:14px;">---</div>
<div class="t" style="left:769px;top:652px;height:14px;line-height:14px;">---</div>
<div class="t" style="left:849px;top:652px;height:14px;line-height:14px;">---</div>
<div class="t" style="left:916px;top:652px;height:14px;line-height:14px;">---</div>
<div class="t" style="left:996px;top:652px;height:14px;line-height:14px;">---</div>
<div class="t" style="left:1111px;top:652px;height:14px;line-height:14px;">---</div>
<div class="t" style="left:1171px;top:652px;height:14px;line-height:14px;width:2px;overflow:hidden">-</div>
<div class="t" style="left:383px;top:669px;height:14px;line-height:14px;letter-spacing:-0.137px;">Direct input</div>
<div class="t" style="left:658px;top:669px;width:33px;text-align:right;line-height:14px;height:14px;">1</div>
<div class="t" style="left:697px;top:669px;height:14px;line-height:14px;">---</div>
<div class="t" style="left:769px;top:669px;height:14px;line-height:14px;">---</div>
<div class="t" style="left:849px;top:669px;height:14px;line-height:14px;">---</div>
<div class="t" style="left:916px;top:669px;height:14px;line-height:14px;">---</div>
<div class="t" style="left:996px;top:669px;height:14px;line-height:14px;">---</div>
<div class="t" style="left:1111px;top:669px;height:14px;line-height:14px;">---</div>
<div class="t" style="left:1171px;top:669px;height:14px;line-height:14px;width:2px;overflow:hidden">-</div>
<div class="t" style="left:383px;top:686px;height:14px;line-height:14px;letter-spacing:-0.137px;">Direct input</div>
<div class="t" style="left:658px;top:686px;width:33px;text-align:right;line-height:14px;height:14px;">1</div>
<div class="t" style="left:697px;top:686px;height:14px;line-height:14px;">---</div>
<div class="t" style="left:769px;top:686px;height:14px;line-height:14px;">---</div>
<div class="t" style="left:849px;top:686px;height:14px;line-height:14px;">---</div>
<div class="t" style="left:916px;top:686px;height:14px;line-height:14px;">---</div>
<div class="t" style="left:996px;top:686px;height:14px;line-height:14px;">---</div>
<div class="t" style="left:1111px;top:686px;height:14px;line-height:14px;">---</div>
<div class="t" style="left:1171px;top:686px;height:14px;line-height:14px;width:2px;overflow:hidden">-</div>
<div class="t" style="left:383px;top:703px;height:14px;line-height:14px;letter-spacing:-0.137px;">Direct input</div>
<div class="t" style="left:658px;top:703px;width:33px;text-align:right;line-height:14px;height:14px;">1</div>
<div class="t" style="left:697px;top:703px;height:14px;line-height:14px;">---</div>
<div class="t" style="left:769px;top:703px;height:14px;line-height:14px;">---</div>
<div class="t" style="left:849px;top:703px;height:14px;line-height:14px;">---</div>
<div class="t" style="left:916px;top:703px;height:14px;line-height:14px;">---</div>
<div class="t" style="left:996px;top:703px;height:14px;line-height:14px;">---</div>
<div class="t" style="left:1111px;top:703px;height:14px;line-height:14px;">---</div>
<div class="t" style="left:1171px;top:703px;height:14px;line-height:14px;width:2px;overflow:hidden">-</div>
<div class="t" style="left:383px;top:720px;height:14px;line-height:14px;letter-spacing:-0.137px;">Direct input</div>
<div class="t" style="left:658px;top:720px;width:33px;text-align:right;line-height:14px;height:14px;">1</div>
<div class="t" style="left:697px;top:720px;height:14px;line-height:14px;">---</div>
<div class="t" style="left:769px;top:720px;height:14px;line-height:14px;">---</div>
<div class="t" style="left:849px;top:720px;height:14px;line-height:14px;">---</div>
<div class="t" style="left:916px;top:720px;height:14px;line-height:14px;">---</div>
<div class="t" style="left:996px;top:720px;height:14px;line-height:14px;">---</div>
<div class="t" style="left:1111px;top:720px;height:14px;line-height:14px;">---</div>
<div class="t" style="left:1171px;top:720px;height:14px;line-height:14px;width:2px;overflow:hidden">-</div>
<div class="t" style="left:383px;top:737px;height:14px;line-height:14px;letter-spacing:-0.137px;">Direct input</div>
<div class="t" style="left:658px;top:737px;width:33px;text-align:right;line-height:14px;height:14px;">1</div>
<div class="t" style="left:697px;top:737px;height:14px;line-height:14px;">---</div>
<div class="t" style="left:769px;top:737px;height:14px;line-height:14px;">---</div>
<div class="t" style="left:849px;top:737px;height:14px;line-height:14px;">---</div>
<div class="t" style="left:916px;top:737px;height:14px;line-height:14px;">---</div>
<div class="t" style="left:996px;top:737px;height:14px;line-height:14px;">---</div>
<div class="t" style="left:1111px;top:737px;height:14px;line-height:14px;">---</div>
<div class="t" style="left:1171px;top:737px;height:14px;line-height:14px;width:2px;overflow:hidden">-</div>
<div class="t" style="left:383px;top:754px;height:14px;line-height:14px;letter-spacing:-0.137px;">Direct input</div>
<div class="t" style="left:658px;top:754px;width:33px;text-align:right;line-height:14px;height:14px;">1</div>
<div class="t" style="left:697px;top:754px;height:14px;line-height:14px;">---</div>
<div class="t" style="left:769px;top:754px;height:14px;line-height:14px;">---</div>
<div class="t" style="left:849px;top:754px;height:14px;line-height:14px;">---</div>
<div class="t" style="left:916px;top:754px;height:14px;line-height:14px;">---</div>
<div class="t" style="left:996px;top:754px;height:14px;line-height:14px;">---</div>
<div class="t" style="left:1111px;top:754px;height:14px;line-height:14px;">---</div>
<div class="t" style="left:1171px;top:754px;height:14px;line-height:14px;width:2px;overflow:hidden">-</div>
<div class="t" style="left:383px;top:771px;height:14px;line-height:14px;letter-spacing:-0.137px;">Direct input</div>
<div class="t" style="left:658px;top:771px;width:33px;text-align:right;line-height:14px;height:14px;">1</div>
<div class="t" style="left:697px;top:771px;height:14px;line-height:14px;">---</div>
<div class="t" style="left:769px;top:771px;height:14px;line-height:14px;">---</div>
<div class="t" style="left:849px;top:771px;height:14px;line-height:14px;">---</div>
<div class="t" style="left:916px;top:771px;height:14px;line-height:14px;">---</div>
<div class="t" style="left:996px;top:771px;height:14px;line-height:14px;">---</div>
<div class="t" style="left:1111px;top:771px;height:14px;line-height:14px;">---</div>
<div class="t" style="left:1171px;top:771px;height:14px;line-height:14px;width:2px;overflow:hidden">-</div>
<div class="t" style="left:383px;top:788px;height:14px;line-height:14px;letter-spacing:-0.137px;">Direct input</div>
<div class="t" style="left:658px;top:788px;width:33px;text-align:right;line-height:14px;height:14px;">1</div>
<div class="t" style="left:697px;top:788px;height:14px;line-height:14px;">---</div>
<div class="t" style="left:769px;top:788px;height:14px;line-height:14px;">---</div>
<div class="t" style="left:849px;top:788px;height:14px;line-height:14px;">---</div>
<div class="t" style="left:916px;top:788px;height:14px;line-height:14px;">---</div>
<div class="t" style="left:996px;top:788px;height:14px;line-height:14px;">---</div>
<div class="t" style="left:1111px;top:788px;height:14px;line-height:14px;">---</div>
<div class="t" style="left:1171px;top:788px;height:14px;line-height:14px;width:2px;overflow:hidden">-</div>
<div style="left:1173px;top:243px;width:17px;height:674px;background:#f0f0f0"></div>
<div style="left:1178px;top:260px;width:11px;height:17px;background:#cdcdcd"></div>
<svg style="left:1177px;top:249px;" width="9" height="6" viewBox="0 0 9 6"><path d="M.7 5.300l3.800-3.800 3.800 3.800" fill="none" stroke="#444" stroke-width="2"/></svg>
<svg style="left:1177px;top:905px;" width="9" height="6" viewBox="0 0 9 6"><path d="M.7 .7l3.800 3.800 3.800-3.800" fill="none" stroke="#444" stroke-width="2"/></svg>
<div style="left:265px;top:917px;width:925px;height:16px;background:#f0f0f0"></div>
<div style="left:282px;top:917px;width:719px;height:15px;background:#cdcdcd"></div>
<svg style="left:270px;top:920px;" width="6" height="9" viewBox="0 0 6 9"><path d="M5.300 .7l-3.800 3.800 3.800 3.800" fill="none" stroke="#444" stroke-width="2"/></svg>
<svg style="left:1161px;top:920px;" width="6" height="9" viewBox="0 0 6 9"><path d="M.7 .7l3.800 3.800-3.800 3.800" fill="none" stroke="#444" stroke-width="2"/></svg>
<div style="left:375px;top:255px;width:803px;height:26px;border:4px solid #f00"></div>
<div style="left:1205px;top:236px;width:240px;height:593px;background:#f0f0f0;box-shadow:0 5px 16px 2px rgba(0,0,0,.28),0 0 3px rgba(0,0,0,.15)"></div>
<div style="left:1205px;top:236px;width:240px;height:31px;background:#0078d7"></div>
<div class="s" style="left:1213px;top:243px;height:18px;line-height:18px;letter-spacing:-0.374px;color:#fff;font-size:13px">Alarm option</div>
<div style="left:1425px;top:244px;width:19px;height:19px;background:#c75050"></div>
<div class="t" style="left:1425px;top:245px;height:16px;line-height:16px;color:#fff;width:19px;text-align:center;font-weight:bold;font-size:11px">x</div>
<div class="t" style="left:1211px;top:277px;height:14px;line-height:14px;">Alarm level</div>
<div style="left:1271px;top:285px;width:167px;height:1px;background:#a0a0a0"></div>
<div style="left:1271px;top:286px;width:167px;height:1px;background:#fff"></div>
<div style="left:1217px;top:299px;width:54px;height:21px;background:#fff;border:1px solid #0078d7"></div>
<div style="left:1253px;top:301px;width:16px;height:8px;background:#f0f0f0;border:1px solid #adadad"></div>
<div style="left:1253px;top:310px;width:16px;height:8px;background:#f0f0f0;border:1px solid #adadad"></div>
<svg style="left:1258px;top:303.5px;" width="6" height="3" viewBox="0 0 6 3"><path d="M0 3h6L3 0z" fill="#111"/></svg>
<svg style="left:1258px;top:312.5px;" width="6" height="3" viewBox="0 0 6 3"><path d="M0 0h6L3 3z" fill="#111"/></svg>
<div style="left:1220px;top:302px;width:7px;height:14px;background:#0078d7"></div>
<div class="t" style="left:1220px;top:302px;height:14px;line-height:14px;color:#fff">1</div>
<div style="left:1211px;top:331px;width:13px;height:13px;background:#fff;border:1px solid #333"></div>
<svg style="left:1212px;top:332px;" width="11" height="11" viewBox="0 0 11 11"><path d="M1.500 5.500l3 3 5-6" fill="none" stroke="#222" stroke-width="1.200"/></svg>
<div class="t" style="left:1227px;top:330px;height:14px;line-height:14px;letter-spacing:-0.224px;">Function</div>
<div style="left:1279px;top:337px;width:159px;height:1px;background:#a0a0a0"></div>
<div style="left:1279px;top:338px;width:159px;height:1px;background:#fff"></div>
<div class="dd" style="left:1217px;top:355px;width:168px;height:22px;"></div>
<div class="t" style="left:1221px;top:359px;height:14px;line-height:14px;letter-spacing:0.026px;">Display global window 0</div>
<svg style="left:1371px;top:364px;" width="9" height="6" viewBox="0 0 9 6"><path d="M.5.7l4 4 4-4" fill="none" stroke="#444" stroke-width="1.100"/></svg>
<div class="t" style="left:1223px;top:386px;height:14px;line-height:14px;letter-spacing:-0.130px;">Window No.</div>
<div style="left:1288px;top:383px;width:65px;height:21px;background:#fff;border:1px solid #7a7a7a"></div>
<div style="left:1335px;top:385px;width:16px;height:8px;background:#f0f0f0;border:1px solid #adadad"></div>
<div style="left:1335px;top:394px;width:16px;height:8px;background:#f0f0f0;border:1px solid #adadad"></div>
<svg style="left:1340px;top:387.5px;" width="6" height="3" viewBox="0 0 6 3"><path d="M0 3h6L3 0z" fill="#111"/></svg>
<svg style="left:1340px;top:396.5px;" width="6" height="3" viewBox="0 0 6 3"><path d="M0 0h6L3 3z" fill="#111"/></svg>
<div class="t" style="left:1291px;top:386px;height:14px;line-height:14px;letter-spacing:-0.486px;">G0101</div>
<div style="left:1207px;top:327px;width:236px;height:81px;border:4px solid #f00"></div>
<div style="left:1211px;top:415px;width:13px;height:13px;background:#fff;border:1px solid #333"></div>
<div class="t" style="left:1227px;top:414px;height:14px;line-height:14px;">Set bit</div>
<div style="left:1270px;top:421px;width:168px;height:1px;background:#a0a0a0"></div>
<div style="left:1270px;top:422px;width:168px;height:1px;background:#fff"></div>
<div class="ddd" style="left:1217px;top:439px;width:60px;height:23px;"></div>
<div class="t" style="left:1222px;top:445px;height:14px;line-height:14px;color:#838383;font-size:12px;font-family:'Liberation Serif',serif;letter-spacing:-.4px">PLC</div>
<svg style="left:1263px;top:448px;" width="9" height="6" viewBox="0 0 9 6"><path d="M.5.7l4 4 4-4" fill="none" stroke="#999" stroke-width="1.100"/></svg>
<div style="left:1282px;top:439px;width:134px;height:21px;background:#fff"></div>
<div style="left:1283px;top:440px;width:132px;height:19px;background:#f0f0f0;border:1px solid #dcdcdc"></div>
<div class="t" style="left:1288px;top:443px;height:14px;line-height:14px;color:#838383">[00]R000000</div>
<div style="left:1421px;top:440px;width:13px;height:19px;background:#ccc;border:1px solid #bfbfbf"></div>
<div class="t" style="left:1421px;top:442px;height:14px;line-height:14px;color:#838383;width:13px;text-align:center">...</div>
<div class="t" style="left:1211px;top:469px;height:14px;line-height:14px;color:#a0a0a0">Write word value</div>
<div style="left:1301px;top:477px;width:137px;height:1px;background:#a0a0a0"></div>
<div style="left:1301px;top:478px;width:137px;height:1px;background:#fff"></div>
<div style="left:1217px;top:495px;width:54px;height:21px;background:#f0f0f0;border:1px solid #d4d4d4;box-shadow:inset 0 0 0 1px #fafafa"></div>
<div style="left:1253px;top:497px;width:16px;height:8px;background:#f0f0f0;border:1px solid #d4d4d4"></div>
<div style="left:1253px;top:506px;width:16px;height:8px;background:#f0f0f0;border:1px solid #d4d4d4"></div>
<svg style="left:1258px;top:499.5px;" width="6" height="3" viewBox="0 0 6 3"><path d="M0 3h6L3 0z" fill="#777"/></svg>
<svg style="left:1258px;top:508.5px;" width="6" height="3" viewBox="0 0 6 3"><path d="M0 0h6L3 3z" fill="#777"/></svg>
<div class="t" style="left:1221px;top:498px;height:14px;line-height:14px;color:#838383">0</div>
<div style="left:1211px;top:534px;width:13px;height:13px;background:#fff;border:1px solid #333"></div>
<div class="t" style="left:1227px;top:533px;height:14px;line-height:14px;">Word log ( &nbsp;0/256)</div>
<div style="left:1339px;top:539px;width:99px;height:1px;background:#a0a0a0"></div>
<div style="left:1339px;top:540px;width:99px;height:1px;background:#fff"></div>
<div class="ddd" style="left:1217px;top:556px;width:60px;height:23px;"></div>
<div class="t" style="left:1222px;top:562px;height:14px;line-height:14px;color:#838383;font-size:12px;font-family:'Liberation Serif',serif;letter-spacing:-.4px">PLC</div>
<svg style="left:1263px;top:565px;" width="9" height="6" viewBox="0 0 9 6"><path d="M.5.7l4 4 4-4" fill="none" stroke="#999" stroke-width="1.100"/></svg>
<div style="left:1282px;top:556px;width:134px;height:21px;background:#fff"></div>
<div style="left:1283px;top:557px;width:132px;height:19px;background:#f0f0f0;border:1px solid #dcdcdc"></div>
<div class="t" style="left:1288px;top:560px;height:14px;line-height:14px;color:#838383">[00]DM00000</div>
<div style="left:1421px;top:557px;width:13px;height:19px;background:#ccc;border:1px solid #bfbfbf"></div>
<div class="t" style="left:1421px;top:559px;height:14px;line-height:14px;color:#838383;width:13px;text-align:center">...</div>
<div class="t" style="left:1211px;top:589px;height:14px;line-height:14px;">Audio play</div>
<div style="left:1265px;top:594px;width:173px;height:1px;background:#a0a0a0"></div>
<div style="left:1265px;top:595px;width:173px;height:1px;background:#fff"></div>
<div class="ddd" style="left:1217px;top:612px;width:168px;height:22px;"></div>
<svg style="left:1371px;top:621px;" width="9" height="6" viewBox="0 0 9 6"><path d="M.5.7l4 4 4-4" fill="none" stroke="#999" stroke-width="1.100"/></svg>
<div class="t" style="left:1211px;top:647px;height:14px;line-height:14px;">KV replay</div>
<div style="left:1271px;top:652px;width:167px;height:1px;background:#a0a0a0"></div>
<div style="left:1271px;top:653px;width:167px;height:1px;background:#fff"></div>
<div class="t" style="left:1216px;top:676px;height:14px;line-height:14px;letter-spacing:-0.175px;color:#838383">Initial display tab</div>
<div class="ddd" style="left:1301px;top:673px;width:98px;height:22px;"></div>
<div class="t" style="left:1305px;top:677px;height:14px;line-height:14px;color:#838383">RTCM</div>
<svg style="left:1385px;top:682px;" width="9" height="6" viewBox="0 0 9 6"><path d="M.5.7l4 4 4-4" fill="none" stroke="#999" stroke-width="1.100"/></svg>
<div class="t" style="left:1217px;top:708px;height:14px;line-height:14px;letter-spacing:-0.560px;color:#838383">RTCM data</div>
<div class="ddd" style="left:1301px;top:705px;width:90px;height:22px;"></div>
<div class="t" style="left:1305px;top:709px;height:14px;line-height:14px;color:#838383">Unuse</div>
<svg style="left:1377px;top:714px;" width="9" height="6" viewBox="0 0 9 6"><path d="M.5.7l4 4 4-4" fill="none" stroke="#999" stroke-width="1.100"/></svg>
<div style="left:1398px;top:706px;width:36px;height:23px;background:#ccc;border:1px solid #bfbfbf"></div>
<div class="t" style="left:1398px;top:710px;height:14px;line-height:14px;color:#838383;width:36px;text-align:center">Edit</div>
<div style="left:1217px;top:734px;width:54px;height:24px;background:#f0f0f0;border:1px solid #d4d4d4;box-shadow:inset 0 0 0 1px #fafafa"></div>
<div style="left:1253px;top:736px;width:16px;height:9px;background:#f0f0f0;border:1px solid #d4d4d4"></div>
<div style="left:1253px;top:746px;width:16px;height:10px;background:#f0f0f0;border:1px solid #d4d4d4"></div>
<svg style="left:1258px;top:739px;" width="6" height="3" viewBox="0 0 6 3"><path d="M0 3h6L3 0z" fill="#777"/></svg>
<svg style="left:1258px;top:749.5px;" width="6" height="3" viewBox="0 0 6 3"><path d="M0 0h6L3 3z" fill="#777"/></svg>
<div class="t" style="left:1221px;top:738px;height:14px;line-height:14px;color:#838383">0</div>
<div style="left:1277px;top:734px;width:157px;height:24px;border:1px solid;border-color:#696969 #fff #fff #696969;background:#f0f0f0"></div>
<div style="left:1278px;top:735px;width:155px;height:22px;border:1px solid;border-color:#a0a0a0 #e3e3e3 #e3e3e3 #a0a0a0"></div>
<div class="t" style="left:1217px;top:771px;height:14px;line-height:14px;letter-spacing:-0.199px;color:#838383">Guidance</div>
<div class="ddd" style="left:1301px;top:768px;width:90px;height:22px;"></div>
<div class="t" style="left:1305px;top:772px;height:14px;line-height:14px;color:#838383">Unuse</div>
<svg style="left:1377px;top:777px;" width="9" height="6" viewBox="0 0 9 6"><path d="M.5.7l4 4 4-4" fill="none" stroke="#999" stroke-width="1.100"/></svg>
<div style="left:1398px;top:769px;width:36px;height:23px;background:#ccc;border:1px solid #bfbfbf"></div>
<div class="t" style="left:1398px;top:773px;height:14px;line-height:14px;color:#838383;width:36px;text-align:center">Edit</div>
<div style="left:1217px;top:797px;width:54px;height:24px;background:#f0f0f0;border:1px solid #d4d4d4;box-shadow:inset 0 0 0 1px #fafafa"></div>
<div style="left:1253px;top:799px;width:16px;height:9px;background:#f0f0f0;border:1px solid #d4d4d4"></div>
<div style="left:1253px;top:809px;width:16px;height:10px;background:#f0f0f0;border:1px solid #d4d4d4"></div>
<svg style="left:1258px;top:802px;" width="6" height="3" viewBox="0 0 6 3"><path d="M0 3h6L3 0z" fill="#777"/></svg>
<svg style="left:1258px;top:812.5px;" width="6" height="3" viewBox="0 0 6 3"><path d="M0 0h6L3 3z" fill="#777"/></svg>
<div class="t" style="left:1221px;top:801px;height:14px;line-height:14px;color:#838383">0</div>
<div style="left:1277px;top:797px;width:157px;height:24px;border:1px solid;border-color:#696969 #fff #fff #696969;background:#f0f0f0"></div>
<div style="left:1278px;top:798px;width:155px;height:22px;border:1px solid;border-color:#a0a0a0 #e3e3e3 #e3e3e3 #a0a0a0"></div>
<div style="left:1868px;top:102px;width:1px;height:370px;background:#fff"></div>
<div style="left:1893px;top:102px;width:1px;height:370px;background:#a0a0a0"></div>
<div style="left:1868px;top:472px;width:26px;height:1px;background:#a0a0a0"></div>
<div style="left:1894px;top:102px;width:1px;height:542px;background:#fff"></div>
<div style="left:1919px;top:102px;width:1px;height:542px;background:#a0a0a0"></div>
<div style="left:1894px;top:504px;width:26px;height:1px;background:#a0a0a0"></div>
<div style="left:1894px;top:505px;width:26px;height:1px;background:#fff"></div>
<div style="left:1894px;top:644px;width:26px;height:1px;background:#a0a0a0"></div>
<div style="left:1871px;top:104px;width:20px;height:4px;border-bottom:1px solid #a0a0a0;border-right:1px solid #a0a0a0"></div>
<div style="left:1871px;top:108px;width:20px;height:1px;background:#fff"></div>
<div style="left:1897px;top:104px;width:20px;height:4px;border-bottom:1px solid #a0a0a0;border-right:1px solid #a0a0a0"></div>
<div style="left:1897px;top:108px;width:20px;height:1px;background:#fff"></div>
<div style="left:1897px;top:507px;width:20px;height:4px;border-bottom:1px solid #a0a0a0;border-right:1px solid #a0a0a0"></div>
<div style="left:1897px;top:511px;width:20px;height:1px;background:#fff"></div>
<svg style="left:1873px;top:115px;" width="16" height="16" viewBox="0 0 16 16"><path d="M1.500 1.500l13 13" stroke="#9a9a9a" stroke-width="1.500"/></svg>
<svg style="left:1873px;top:137px;" width="16" height="16" viewBox="0 0 16 16"><path d="M.5 10.500l3.500-3.500 2.500 3 3.500-4 2 2.500 3.500-4" fill="none" stroke="#9a9a9a" stroke-width="1.400"/></svg>
<svg style="left:1873px;top:159px;" width="16" height="16" viewBox="0 0 16 16"><rect x="1" y="3" width="14" height="10" fill="#9a9a9a"/></svg>
<svg style="left:1873px;top:181px;" width="16" height="16" viewBox="0 0 16 16"><path d="M8 0l7 4v8l-7 4-7-4V4z" fill="#9a9a9a"/></svg>
<svg style="left:1873px;top:203px;" width="16" height="16" viewBox="0 0 16 16"><ellipse cx="8" cy="8" rx="8" ry="5.500" fill="#9a9a9a"/></svg>
<svg style="left:1873px;top:225px;" width="16" height="16" viewBox="0 0 16 16"><path d="M1.500 1.500c7 0 12 5 12 12" fill="none" stroke="#9a9a9a" stroke-width="1.600"/></svg>
<svg style="left:1873px;top:247px;" width="16" height="16" viewBox="0 0 16 16"><path d="M2 1.500c7 0 13 6 13 13H2z" fill="#9a9a9a"/></svg>
<svg style="left:1873px;top:275px;" width="16" height="16" viewBox="0 0 16 16"><rect x=".5" y="1.500" width="15" height="13" fill="#fff" stroke="#8a8a8a" stroke-width="1.200"/><path d="M5.500 3l2.500 5h-1.500l2 4h-2.500v1.500h-1v-1.500h-2.500l2-4h-1.500zM11 3l2.500 5h-1.500l2 4h-2.500v1.500h-1v-1.500h-2.500l2-4h-1.500z" fill="#8a8a8a"/></svg>
<svg style="left:1873px;top:297px;" width="16" height="16" viewBox="0 0 16 16"><rect x="2" y="2" width="12" height="12" rx="1.500" fill="none" stroke="#c8c8c8" stroke-width="1.500"/></svg>
<svg style="left:1873px;top:325px;" width="16" height="16" viewBox="0 0 16 16"><text x="8" y="15" font-size="19" font-weight="bold" text-anchor="middle" fill="#9a9a9a" font-family="Liberation Sans">A</text></svg>
<svg style="left:1873px;top:347px;" width="16" height="16" viewBox="0 0 16 16"><path d="M4.500 1.500h10v10l-3 3h-7z" fill="#fafafa" stroke="#ddd"/><rect x="0" y="2.500" width="7" height="5" fill="#9a9a9a"/><path d="M7 5h3M7 8h5M7 10.500h5" stroke="#ccc"/></svg>
<svg style="left:1873px;top:375px;" width="16" height="16" viewBox="0 0 16 16"><text x="8" y="12.500" font-size="11.500" text-anchor="middle" fill="#9a9a9a" font-family="Liberation Sans" textLength="16" lengthAdjust="spacingAndGlyphs">DXF</text></svg>
<svg style="left:1873px;top:397px;" width="16" height="16" viewBox="0 0 16 16"><rect x="2" y="2" width="12" height="12" fill="#fff" stroke="#9a9a9a" stroke-width="1.300"/><path d="M6 2v12M10 2v12M2 6h12M2 10h12" stroke="#9a9a9a" stroke-width="1.300"/></svg>
<svg style="left:1873px;top:419px;" width="16" height="16" viewBox="0 0 16 16"><rect x="1" y="2" width="14" height="12" fill="#fff" stroke="#9a9a9a" stroke-width="1.300"/><rect x="1" y="2" width="14" height="2.500" fill="#9a9a9a"/><path d="M4.500 2v12M8 2v12M11.500 2v12M1 7h14M1 9.500h14M1 12h14" stroke="#bbb" stroke-width=".8"/></svg>
<svg style="left:1873px;top:442px;" width="16" height="16" viewBox="0 0 16 16"><rect x="1" y="1" width="10" height="9" fill="#f6f6f6" stroke="#9a9a9a" stroke-width="1.200"/><rect x="5" y="5" width="10" height="10" fill="#f6f6f6" stroke="#9a9a9a" stroke-width="1.200"/><path d="M8 7.500h3.500v3" fill="none" stroke="#9a9a9a" stroke-width="1.300"/><path d="M9 10h5l-2.500 3z" fill="#9a9a9a"/></svg>
<svg style="left:1899px;top:115px;" width="16" height="16" viewBox="0 0 16 16"><rect x=".7" y="2.500" width="14.600" height="11.500" fill="#fff" stroke="#8a8a8a" stroke-width="1.200"/><text x="8" y="11.800" font-size="8.500" text-anchor="middle" fill="#666" font-family="Liberation Sans" textLength="12" lengthAdjust="spacingAndGlyphs">123</text></svg>
<svg style="left:1899px;top:137px;" width="16" height="16" viewBox="0 0 16 16"><rect x=".7" y="2.500" width="14.600" height="11.500" fill="#fff" stroke="#8a8a8a" stroke-width="1.200"/><text x="8" y="11.800" font-size="8.500" text-anchor="middle" fill="#666" font-family="Liberation Sans" textLength="11" lengthAdjust="spacingAndGlyphs">ABC</text></svg>
<svg style="left:1899px;top:159px;" width="16" height="16" viewBox="0 0 16 16"><rect x="1" y="2.500" width="14" height="11.500" fill="#fff" stroke="#8a8a8a" stroke-width="1.200"/><path d="M3 5.500h7.500M3 8.300h7.500M3 11h7.500" stroke="#8a8a8a"/><path d="M12.500 3v11" stroke="#8a8a8a"/><rect x="12.500" y="5.500" width="2.500" height="3" fill="#8a8a8a"/></svg>
<svg style="left:1899px;top:181px;" width="16" height="16" viewBox="0 0 16 16"><path d="M9 6h2l4-3v10l-4-3h-2z" fill="#9a9a9a"/><path d="M7 4.500c-2 2-2 5 0 7M4.500 2.500c-3 3.500-3 7.500 0 11M2.200 1c-3 4.500-3 9.500 0 14" fill="none" stroke="#9a9a9a" stroke-width=".9"/></svg>
<svg style="left:1899px;top:203px;" width="16" height="16" viewBox="0 0 16 16"><path d="M0 4l4 3v2l-4 3z" fill="#777"/><rect x="4" y="4" width="12" height="8" rx="1" fill="#777"/><rect x="6.500" y="5.500" width="3" height="5" fill="#a8a8a8"/><rect x="10.500" y="5.500" width="1.800" height="5" fill="#bbb"/><rect x="13" y="5.500" width="1.800" height="5" fill="#bbb"/></svg>
<svg style="left:1899px;top:225px;" width="16" height="16" viewBox="0 0 16 16"><rect x="2" y="1" width="12" height="14" fill="#8a8a8a"/><rect x="4.500" y="2.500" width="7" height="4.800" fill="#fff"/><rect x="4.500" y="8.700" width="7" height="4.800" fill="#fff"/><g fill="#fff"><rect x="2.700" y="2" width="1" height="1.500"/><rect x="2.700" y="5" width="1" height="1.500"/><rect x="2.700" y="8" width="1" height="1.500"/><rect x="2.700" y="11" width="1" height="1.500"/><rect x="12.300" y="2" width="1" height="1.500"/><rect x="12.300" y="5" width="1" height="1.500"/><rect x="12.300" y="8" width="1" height="1.500"/><rect x="12.300" y="11" width="1" height="1.500"/></g></svg>
<svg style="left:1899px;top:247px;" width="16" height="16" viewBox="0 0 16 16"><path d="M1 4h3M6 4h3M4 2v4M6 2v4" stroke="#9a9a9a"/><rect x="9" y="1" width="7" height="6" fill="#9a9a9a"/><rect x="0" y="10" width="10" height="6" fill="#ddd"/><path d="M13 7v3c0 2-2 3-4 3H7" fill="none" stroke="#9a9a9a" stroke-width="1.500"/><path d="M8 10.500v5l-3.500-2.500z" fill="#9a9a9a"/></svg>
<svg style="left:1899px;top:269px;" width="16" height="16" viewBox="0 0 16 16"><rect x=".5" y=".5" width="9" height="8" fill="#fff" stroke="#9a9a9a"/><path d="M3.500 2l1.500 3h-3zM7 2l1.500 3h-3zM3.500 5v2M7 5v2" stroke="#9a9a9a" fill="#9a9a9a" stroke-width=".6"/><path d="M4 9.500h4l1 1h7v5.500h-12z" fill="#e8e8e8"/><path d="M11 3c3 0 4.500 1.500 4.500 5" fill="none" stroke="#9a9a9a"/><path d="M12.500 1l-2.500 2 2.500 2" fill="none" stroke="#9a9a9a"/></svg>
<svg style="left:1899px;top:291px;" width="16" height="16" viewBox="0 0 16 16"><rect x="0" y="1" width="10" height="8" fill="#111"/><rect x="1.500" y="2.500" width="3" height="5" fill="#fff"/><rect x="5.500" y="2.500" width="3" height="5" fill="#fff"/><path d="M1 5h8" stroke="#111"/><rect x="7" y="7" width="9" height="6.500" fill="#ddd" stroke="#999"/><path d="M11.500 13.500v2M8.500 15.500h6" stroke="#999"/></svg>
<svg style="left:1899px;top:313px;" width="16" height="16" viewBox="0 0 16 16"><rect x=".7" y="2" width="14.600" height="12" rx="1" fill="#ddd" stroke="#8a8a8a" stroke-width="1.300"/><rect x="2.500" y="4" width="11" height="7" fill="#8a8a8a"/><path d="M3 5l3.500 2.500-3.500 2.500z" fill="#eee"/></svg>
<svg style="left:1899px;top:341px;" width="16" height="16" viewBox="0 0 16 16"><path d="M1.500 3v2M4 3v2M6.500 3v2M9 3v2M11.500 3v2M14 3v2M1 3h14" stroke="#9a9a9a" stroke-width=".8"/><rect x="1" y="7" width="14" height="6" fill="#fff" stroke="#9a9a9a"/><rect x="1" y="7" width="8" height="6" fill="#9a9a9a"/></svg>
<svg style="left:1899px;top:363px;" width="16" height="16" viewBox="0 0 16 16"><circle cx="8" cy="8.500" r="5.500" fill="#d0d0d0" stroke="#8a8a8a" stroke-width="1.300"/><circle cx="8.500" cy="9" r="2" fill="#fff"/><path d="M8 1v2M2 4l1.500 1.500M14 4l-1.500 1.500M1 10h1.500M15 10h-1.500M3 14.500l1-1M13 14.500l-1-1" stroke="#8a8a8a" stroke-width="1.200"/></svg>
<svg style="left:1899px;top:385px;" width="16" height="16" viewBox="0 0 16 16"><path d="M1 7l2.500 7h9L15 7z" fill="#9a9a9a"/><path d="M9.500 8.500l4-.8-1.500 5h-2.500z" fill="#eee"/><path d="M1.500 4.500l1 2M5 2.500l.5 3M8 2v3.500M11 2.500l-.5 3M14.500 4.500l-1 2" stroke="#9a9a9a" stroke-width=".9"/></svg>
<svg style="left:1899px;top:407px;" width="16" height="16" viewBox="0 0 16 16"><rect x="4" y="1.500" width="8" height="5" fill="#9a9a9a"/><rect x="4" y="6.500" width="8" height="3" fill="#d8d8d8"/><rect x="4" y="9.500" width="8" height="1.500" fill="#b0b0b0"/><rect x="4" y="11" width="8" height="3.500" fill="#dcdcdc"/></svg>
<svg style="left:1899px;top:429px;" width="16" height="16" viewBox="0 0 16 16"><circle cx="8" cy="8" r="6.500" fill="#c4c4c4"/><path d="M8 8V1.500A6.500 6.500 0 0 1 13.600 11.200z" fill="#aaa"/><path d="M8 8l5.600 3.200A6.500 6.500 0 0 1 3 12.200z" fill="#d8d8d8"/></svg>
<svg style="left:1899px;top:451px;" width="16" height="16" viewBox="0 0 16 16"><rect x=".7" y="1.500" width="14.600" height="13" fill="#fff" stroke="#8a8a8a" stroke-width="1.200"/><path d="M1 6c3-3 4 0 7 3s4 2 7-4M1 11c3-3 4-1 6 0s5 1 8 2" fill="none" stroke="#8a8a8a" stroke-width=".9"/></svg>
<svg style="left:1899px;top:473px;" width="16" height="16" viewBox="0 0 16 16"><rect x=".7" y="1.500" width="14.600" height="13" fill="#fff" stroke="#8a8a8a" stroke-width="1.200"/><path d="M3.500 8c0-3 2-3.500 3-2.500s2-2 3.500-.5 3 1 2.500 3-1 3-2.500 2-2 2-3.500 1-3 0-3-3z" fill="none" stroke="#8a8a8a" stroke-width=".9"/></svg>
<svg style="left:1899px;top:517px;" width="16" height="16" viewBox="0 0 16 16"><rect x="3" y="1" width="8" height="9" fill="#d8d8d8"/><path d="M2 9.500h8" stroke="#aaa"/><path d="M10 1v9" stroke="#aaa"/><ellipse cx="10" cy="12" rx="5" ry="3" fill="#e2e2e2"/></svg>
<svg style="left:1899px;top:539px;" width="16" height="16" viewBox="0 0 16 16"><rect x="2" y="1" width="9" height="9" fill="#aaa"/><rect x="2" y="1" width="6" height="6" fill="#bbb"/><ellipse cx="10" cy="12.500" rx="5" ry="3" fill="#e2e2e2"/></svg>
<svg style="left:1899px;top:561px;" width="16" height="16" viewBox="0 0 16 16"><circle cx="8" cy="6" r="5" fill="#dedede"/><rect x="6" y="10.500" width="4" height="2" fill="#ccc"/><rect x="6" y="12.500" width="4" height="2.500" fill="#aaa"/></svg>
<svg style="left:1899px;top:583px;" width="16" height="16" viewBox="0 0 16 16"><circle cx="11.500" cy="4.500" r="3.500" fill="#e0e0e0"/><circle cx="7" cy="8" r="3" fill="#d0d0d0"/><circle cx="3.500" cy="10" r="2.500" fill="#c0c0c0"/><rect x="3" y="11" width="2.500" height="4" fill="#c0c0c0"/><circle cx="11" cy="9.500" r="1.200" fill="#c0c0c0"/></svg>
<svg style="left:1899px;top:612px;" width="16" height="16" viewBox="0 0 16 16"><rect x="6" y="1" width="9" height="9" fill="#e0e0e0"/><rect x="3.500" y="3.500" width="9" height="9" fill="#d0d0d0"/><path d="M1 6v9h9v-2.500H3.500V6z" fill="#b4b4b4"/></svg>
<div style="left:1871px;top:268px;width:21px;height:1px;background:#a0a0a0"></div>
<div style="left:1871px;top:269px;width:21px;height:1px;background:#fff"></div>
<div style="left:1871px;top:319px;width:21px;height:1px;background:#a0a0a0"></div>
<div style="left:1871px;top:320px;width:21px;height:1px;background:#fff"></div>
<div style="left:1871px;top:368px;width:21px;height:1px;background:#a0a0a0"></div>
<div style="left:1871px;top:369px;width:21px;height:1px;background:#fff"></div>
<div style="left:1897px;top:335px;width:21px;height:1px;background:#a0a0a0"></div>
<div style="left:1897px;top:336px;width:21px;height:1px;background:#fff"></div>
<div style="left:1897px;top:605px;width:21px;height:1px;background:#a0a0a0"></div>
<div style="left:1897px;top:606px;width:21px;height:1px;background:#fff"></div>
<svg style="left:1885px;top:462px;" width="4" height="7" viewBox="0 0 4 7"><path d="M0 0l3.500 3.500L0 7z" fill="#000"/></svg>
<svg style="left:1911px;top:494px;" width="4" height="7" viewBox="0 0 4 7"><path d="M0 0l3.500 3.500L0 7z" fill="#000"/></svg>
<svg style="left:1911px;top:633px;" width="4" height="7" viewBox="0 0 4 7"><path d="M0 0l3.500 3.500L0 7z" fill="#000"/></svg>
<div style="left:0px;top:965px;width:424px;height:27px;border-right:1px solid #a0a0a0;border-bottom:1px solid #a0a0a0;border-top:1px solid #fff"></div>
<div style="left:424px;top:965px;width:181px;height:27px;border-right:1px solid #a0a0a0;border-bottom:1px solid #a0a0a0;border-top:1px solid #fff;border-left:1px solid #fff"></div>
<div style="left:2px;top:968px;width:4px;height:20px;border-right:1px solid #a0a0a0;border-bottom:1px solid #a0a0a0"></div>
<div style="left:426px;top:968px;width:4px;height:20px;border-right:1px solid #a0a0a0;border-bottom:1px solid #a0a0a0"></div>
<div style="left:30px;top:967px;width:22px;height:23px;background:#f6f6f6;border:1px solid;border-color:#a0a0a0 #fff #fff #a0a0a0"></div>
<svg style="left:11px;top:970px;" width="16" height="16" viewBox="0 0 16 16"><path d="M7 1l5 6h-10z" fill="#fafafa" stroke="#ddd"/><rect x="1" y="9" width="6" height="5" fill="#fafafa" stroke="#ddd"/><circle cx="6" cy="7" r="3.500" fill="#aaa"/><path d="M7 5l0 8 2-2 1.500 3 1.200-.6-1.500-3h2.800z" fill="#fff" stroke="#888" stroke-width=".9"/></svg>
<svg style="left:33px;top:970px;" width="16" height="16" viewBox="0 0 16 16"><path d="M4 1l0 12 3-3 2 4.500 1.800-.9-2-4.500h4z" fill="#fff" stroke="#555" stroke-width=".9"/></svg>
<svg style="left:61px;top:970px;" width="16" height="16" viewBox="0 0 16 16"><circle cx="5" cy="3.500" r="2.500" fill="#9a9a9a"/><rect x="8" y="1" width="7" height="5" fill="#9a9a9a"/><rect x="1" y="7.500" width="14" height="7.500" fill="#fff" stroke="#9a9a9a"/><text x="8" y="14" font-size="6.500" text-anchor="middle" fill="#777" font-family="Liberation Sans">123</text></svg>
<svg style="left:83px;top:970px;" width="16" height="16" viewBox="0 0 16 16"><circle cx="4" cy="4" r="3" fill="#c4c4c4"/><circle cx="10" cy="11" r="4" fill="#9a9a9a"/><path d="M8 2c4 0 5 2 5 4" fill="none" stroke="#9a9a9a" stroke-width="1.200"/><path d="M11 5.500h4l-2 2.500z" fill="#9a9a9a"/></svg>
<svg style="left:105px;top:970px;" width="16" height="16" viewBox="0 0 16 16"><rect x="1.500" y="1.500" width="13" height="13" fill="#f4f4f4" stroke="#c4c4c4"/><rect x="3.500" y="3.500" width="9" height="9" fill="none" stroke="#c4c4c4"/><path d="M3.500 3.500l9 9M12.500 3.500l-9 9" stroke="#c4c4c4"/></svg>
<svg style="left:133px;top:970px;" width="16" height="16" viewBox="0 0 16 16"><path d="M3 6a5.500 4 0 0 1 10 0M13 10a5.500 4 0 0 1-10 0" fill="none" stroke="#9a9a9a" stroke-width="1.200" stroke-dasharray="2 1"/><path d="M13 3v4h-4zM3 13V9h4z" fill="#9a9a9a"/></svg>
<svg style="left:155px;top:970px;" width="16" height="16" viewBox="0 0 16 16"><path d="M7 2v12.500H1.500z" fill="#fff" stroke="#9a9a9a" stroke-width=".9"/><path d="M9 1.500v13.500h6z" fill="#999"/></svg>
<svg style="left:177px;top:970px;" width="16" height="16" viewBox="0 0 16 16"><path d="M1 7h14V1z" fill="#fff" stroke="#9a9a9a" stroke-width=".8" transform="translate(0,0)"/><path d="M1.500 9h13v6z" fill="#9a9a9a"/></svg>
<svg style="left:199px;top:970px;" width="16" height="16" viewBox="0 0 16 16"><path d="M8 1.500l6.500 13h-13z" fill="#e0e0e0" stroke="#9a9a9a" stroke-dasharray="1 1"/><circle cx="8" cy="2" r="1.200" fill="#777"/></svg>
<svg style="left:227px;top:970px;" width="16" height="16" viewBox="0 0 16 16"><rect x="1" y="1" width="9" height="9" fill="#888"/><rect x="6" y="6" width="9" height="9" fill="#888" stroke="#f0f0f0"/></svg>
<svg style="left:249px;top:970px;" width="16" height="16" viewBox="0 0 16 16"><rect x="1" y="1" width="8" height="8" fill="#999"/><rect x="7" y="7" width="8" height="8" fill="#fff" stroke="#888"/><rect x="4" y="4" width="6" height="6" fill="#888"/></svg>
<svg style="left:271px;top:970px;" width="16" height="16" viewBox="0 0 16 16"><rect x="1" y="1" width="9" height="9" fill="#999"/><rect x="6.500" y="6.500" width="8" height="8" fill="#fff" stroke="#888"/></svg>
<svg style="left:293px;top:970px;" width="16" height="16" viewBox="0 0 16 16"><rect x="1" y="1" width="9" height="9" fill="#999"/><rect x="6.500" y="6.500" width="8" height="8" fill="#fff" stroke="#888"/></svg>
<svg style="left:315px;top:970px;" width="16" height="16" viewBox="0 0 16 16"><rect x="2.500" y="2.500" width="11" height="11" fill="none" stroke="#888" stroke-dasharray="2 1"/><rect x="5" y="5" width="7" height="7" fill="#fff" stroke="#999"/><g fill="#555"><rect x="1" y="1" width="3" height="3"/><rect x="12" y="1" width="3" height="3"/><rect x="1" y="12" width="3" height="3"/><rect x="12" y="12" width="3" height="3"/></g></svg>
<svg style="left:337px;top:970px;" width="16" height="16" viewBox="0 0 16 16"><rect x="2.500" y="2.500" width="11" height="11" fill="none" stroke="#888"/><rect x="5" y="5" width="7" height="7" fill="#fff" stroke="#999"/><g fill="#555"><rect x="1" y="1" width="3" height="3"/><rect x="12" y="1" width="3" height="3"/><rect x="1" y="12" width="3" height="3"/><rect x="12" y="12" width="3" height="3"/><rect x="6.500" y="1" width="3" height="3"/><rect x="6.500" y="12" width="3" height="3"/></g></svg>
<svg style="left:359px;top:970px;" width="16" height="16" viewBox="0 0 16 16"><path d="M1.500 1v14" stroke="#777" stroke-width="1.300"/><rect x="4" y="2" width="10" height="4" fill="#888"/><rect x="8" y="9" width="6" height="4" fill="#888"/><path d="M3 11h4M3 11l2-1.500M3 11l2 1.500" stroke="#777" fill="none"/></svg>
<svg style="left:393px;top:970px;" width="16" height="16" viewBox="0 0 16 16"><rect x=".5" y=".5" width="15" height="15" fill="#fff" stroke="#888"/><path d="M8 2l5 12h-3l-2-5-2 5H3z" fill="#aaa"/></svg>
<svg style="left:435px;top:970px;" width="16" height="16" viewBox="0 0 16 16"><rect x="1" y="1" width="6" height="5" fill="#fff" stroke="#888"/><rect x="5" y="8" width="7" height="5" fill="#fff" stroke="#888"/><path d="M3 6v5h2" fill="none" stroke="#888"/><path d="M10 8l0 8 2-2 1.500 3 1.200-.6-1.500-3h2.800z" fill="#fff" stroke="#888" stroke-width=".9"/></svg>
<svg style="left:462px;top:970px;" width="16" height="16" viewBox="0 0 16 16"><path d="M1.500 14V2.500h10v7" fill="none" stroke="#888" stroke-width="1.200"/><path d="M9 6l0 8 2-2 1.500 3 1.200-.6-1.500-3h2.800z" fill="#fff" stroke="#888" stroke-width=".9"/></svg>
<svg style="left:485px;top:970px;" width="16" height="16" viewBox="0 0 16 16"><rect x="2.500" y="2.500" width="8" height="8" fill="none" stroke="#888" stroke-width="1.200"/><path d="M10.500 1v3" stroke="#888"/><path d="M7 6l0 8 2-2 1.500 3 1.200-.6-1.500-3h2.800z" fill="#fff" stroke="#888" stroke-width=".9"/></svg>
<svg style="left:507px;top:970px;" width="16" height="16" viewBox="0 0 16 16"><path d="M1 2.500h11M8 2.500v7" fill="none" stroke="#888" stroke-width="1.200"/><path d="M8 6l0 8 2-2 1.500 3 1.200-.6-1.500-3h2.800z" fill="#fff" stroke="#888" stroke-width=".9"/></svg>
<svg style="left:529px;top:970px;" width="16" height="16" viewBox="0 0 16 16"><path d="M1 2.500h11M5 2.500v6M10 2.500v5" fill="none" stroke="#888" stroke-width="1.200"/><path d="M8 6l0 8 2-2 1.500 3 1.200-.6-1.500-3h2.800z" fill="#fff" stroke="#888" stroke-width=".9"/></svg>
<svg style="left:551px;top:970px;" width="16" height="16" viewBox="0 0 16 16"><rect x="1.500" y="2.500" width="5" height="8" fill="none" stroke="#888" stroke-width="1.200"/><path d="M9.500 1v10" stroke="#888" stroke-width="1.200"/><path d="M9 6l0 8 2-2 1.500 3 1.200-.6-1.500-3h2.800z" fill="#fff" stroke="#888" stroke-width=".9"/></svg>
<svg style="left:573px;top:970px;" width="16" height="16" viewBox="0 0 16 16"><rect x="2.500" y="1.500" width="9" height="4" fill="none" stroke="#888" stroke-width="1.200"/><path d="M1 8.500h12" stroke="#888" stroke-width="1.200"/><path d="M8 7l0 8 2-2 1.500 3 1.200-.6-1.500-3h2.800z" fill="#fff" stroke="#888" stroke-width=".9"/></svg>
<div style="left:54px;top:968px;width:1px;height:20px;background:#a0a0a0"></div>
<div style="left:126px;top:968px;width:1px;height:20px;background:#a0a0a0"></div>
<div style="left:220px;top:968px;width:1px;height:20px;background:#a0a0a0"></div>
<div style="left:456px;top:968px;width:1px;height:20px;background:#a0a0a0"></div>
<svg style="left:381px;top:975px;" width="5" height="3" viewBox="0 0 5 3"><path d="M0 3h5L2.500 0z" fill="#444"/></svg>
<svg style="left:413px;top:982px;" width="7" height="4" viewBox="0 0 7 4"><path d="M0 0h7l-3.500 4z" fill="#000"/></svg>
<svg style="left:594px;top:982px;" width="7" height="4" viewBox="0 0 7 4"><path d="M0 0h7l-3.500 4z" fill="#000"/></svg>
<div style="left:0px;top:992px;width:437px;height:29px;border-right:1px solid #a0a0a0;border-bottom:1px solid #a0a0a0;border-top:1px solid #fff"></div>
<div style="left:2px;top:995px;width:4px;height:22px;border-right:1px solid #a0a0a0;border-bottom:1px solid #a0a0a0"></div>
<div class="s" style="left:9px;top:999px;height:14px;line-height:14px;">(</div>
<div style="left:20px;top:996px;width:51px;height:20px;background:#f0f0f0;border:1px solid #d9d9d9;outline:1px solid #fafafa"></div>
<div style="left:54px;top:998px;width:13px;height:7px;background:#f0f0f0;border:1px solid #d4d4d4"></div>
<div style="left:54px;top:1006px;width:13px;height:8px;background:#f0f0f0;border:1px solid #d4d4d4"></div>
<svg style="left:57.5px;top:1000px;" width="6" height="3" viewBox="0 0 6 3"><path d="M0 3h6L3 0z" fill="#777"/></svg>
<svg style="left:57.5px;top:1008.5px;" width="6" height="3" viewBox="0 0 6 3"><path d="M0 0h6L3 3z" fill="#777"/></svg>
<div class="s" style="left:76px;top:999px;height:14px;line-height:14px;">,</div>
<div style="left:89px;top:996px;width:51px;height:20px;background:#f0f0f0;border:1px solid #d9d9d9;outline:1px solid #fafafa"></div>
<div style="left:123px;top:998px;width:13px;height:7px;background:#f0f0f0;border:1px solid #d4d4d4"></div>
<div style="left:123px;top:1006px;width:13px;height:8px;background:#f0f0f0;border:1px solid #d4d4d4"></div>
<svg style="left:126.5px;top:1000px;" width="6" height="3" viewBox="0 0 6 3"><path d="M0 3h6L3 0z" fill="#777"/></svg>
<svg style="left:126.5px;top:1008.5px;" width="6" height="3" viewBox="0 0 6 3"><path d="M0 0h6L3 3z" fill="#777"/></svg>
<div class="s" style="left:146px;top:999px;height:14px;line-height:14px;letter-spacing:0.069px;">) - (</div>
<div style="left:170px;top:996px;width:51px;height:20px;background:#f0f0f0;border:1px solid #d9d9d9;outline:1px solid #fafafa"></div>
<div style="left:204px;top:998px;width:13px;height:7px;background:#f0f0f0;border:1px solid #d4d4d4"></div>
<div style="left:204px;top:1006px;width:13px;height:8px;background:#f0f0f0;border:1px solid #d4d4d4"></div>
<svg style="left:207.5px;top:1000px;" width="6" height="3" viewBox="0 0 6 3"><path d="M0 3h6L3 0z" fill="#777"/></svg>
<svg style="left:207.5px;top:1008.5px;" width="6" height="3" viewBox="0 0 6 3"><path d="M0 0h6L3 3z" fill="#777"/></svg>
<div class="s" style="left:226px;top:999px;height:14px;line-height:14px;">,</div>
<div style="left:238px;top:996px;width:51px;height:20px;background:#f0f0f0;border:1px solid #d9d9d9;outline:1px solid #fafafa"></div>
<div style="left:272px;top:998px;width:13px;height:7px;background:#f0f0f0;border:1px solid #d4d4d4"></div>
<div style="left:272px;top:1006px;width:13px;height:8px;background:#f0f0f0;border:1px solid #d4d4d4"></div>
<svg style="left:275.5px;top:1000px;" width="6" height="3" viewBox="0 0 6 3"><path d="M0 3h6L3 0z" fill="#777"/></svg>
<svg style="left:275.5px;top:1008.5px;" width="6" height="3" viewBox="0 0 6 3"><path d="M0 0h6L3 3z" fill="#777"/></svg>
<div class="s" style="left:293px;top:999px;height:14px;line-height:14px;">)</div>
<div style="left:305px;top:996px;width:48px;height:20px;background:#f0f0f0;border:1px solid #d9d9d9;outline:1px solid #fafafa"></div>
<div style="left:336px;top:998px;width:13px;height:7px;background:#f0f0f0;border:1px solid #d4d4d4"></div>
<div style="left:336px;top:1006px;width:13px;height:8px;background:#f0f0f0;border:1px solid #d4d4d4"></div>
<svg style="left:339.5px;top:1000px;" width="6" height="3" viewBox="0 0 6 3"><path d="M0 3h6L3 0z" fill="#777"/></svg>
<svg style="left:339.5px;top:1008.5px;" width="6" height="3" viewBox="0 0 6 3"><path d="M0 0h6L3 3z" fill="#777"/></svg>
<div class="s" style="left:357px;top:999px;height:14px;line-height:14px;">x</div>
<div style="left:371px;top:996px;width:48px;height:20px;background:#f0f0f0;border:1px solid #d9d9d9;outline:1px solid #fafafa"></div>
<div style="left:402px;top:998px;width:13px;height:7px;background:#f0f0f0;border:1px solid #d4d4d4"></div>
<div style="left:402px;top:1006px;width:13px;height:8px;background:#f0f0f0;border:1px solid #d4d4d4"></div>
<svg style="left:405.5px;top:1000px;" width="6" height="3" viewBox="0 0 6 3"><path d="M0 3h6L3 0z" fill="#777"/></svg>
<svg style="left:405.5px;top:1008.5px;" width="6" height="3" viewBox="0 0 6 3"><path d="M0 0h6L3 3z" fill="#777"/></svg>
<div style="left:1615px;top:1023px;width:61px;height:18px;border-left:1px solid #a0a0a0;border-top:1px solid #a0a0a0"></div>
<div class="s" style="left:1618px;top:1025px;height:14px;line-height:14px;letter-spacing:-0.460px;">VT5-WX15</div>
<div style="left:1679px;top:1023px;width:187px;height:18px;border-left:1px solid #a0a0a0;border-top:1px solid #a0a0a0"></div>
<div class="s" style="left:1682px;top:1025px;height:14px;line-height:14px;letter-spacing:-0.552px;">KEYENCE KV-X500/X300 (Ethernet)</div>
<div style="left:1869px;top:1023px;width:51px;height:18px;border-left:1px solid #a0a0a0;border-top:1px solid #a0a0a0"></div>
<div class="s" style="left:1872px;top:1025px;height:14px;line-height:14px;letter-spacing:0.744px;">----,----</div>
</body></html>
